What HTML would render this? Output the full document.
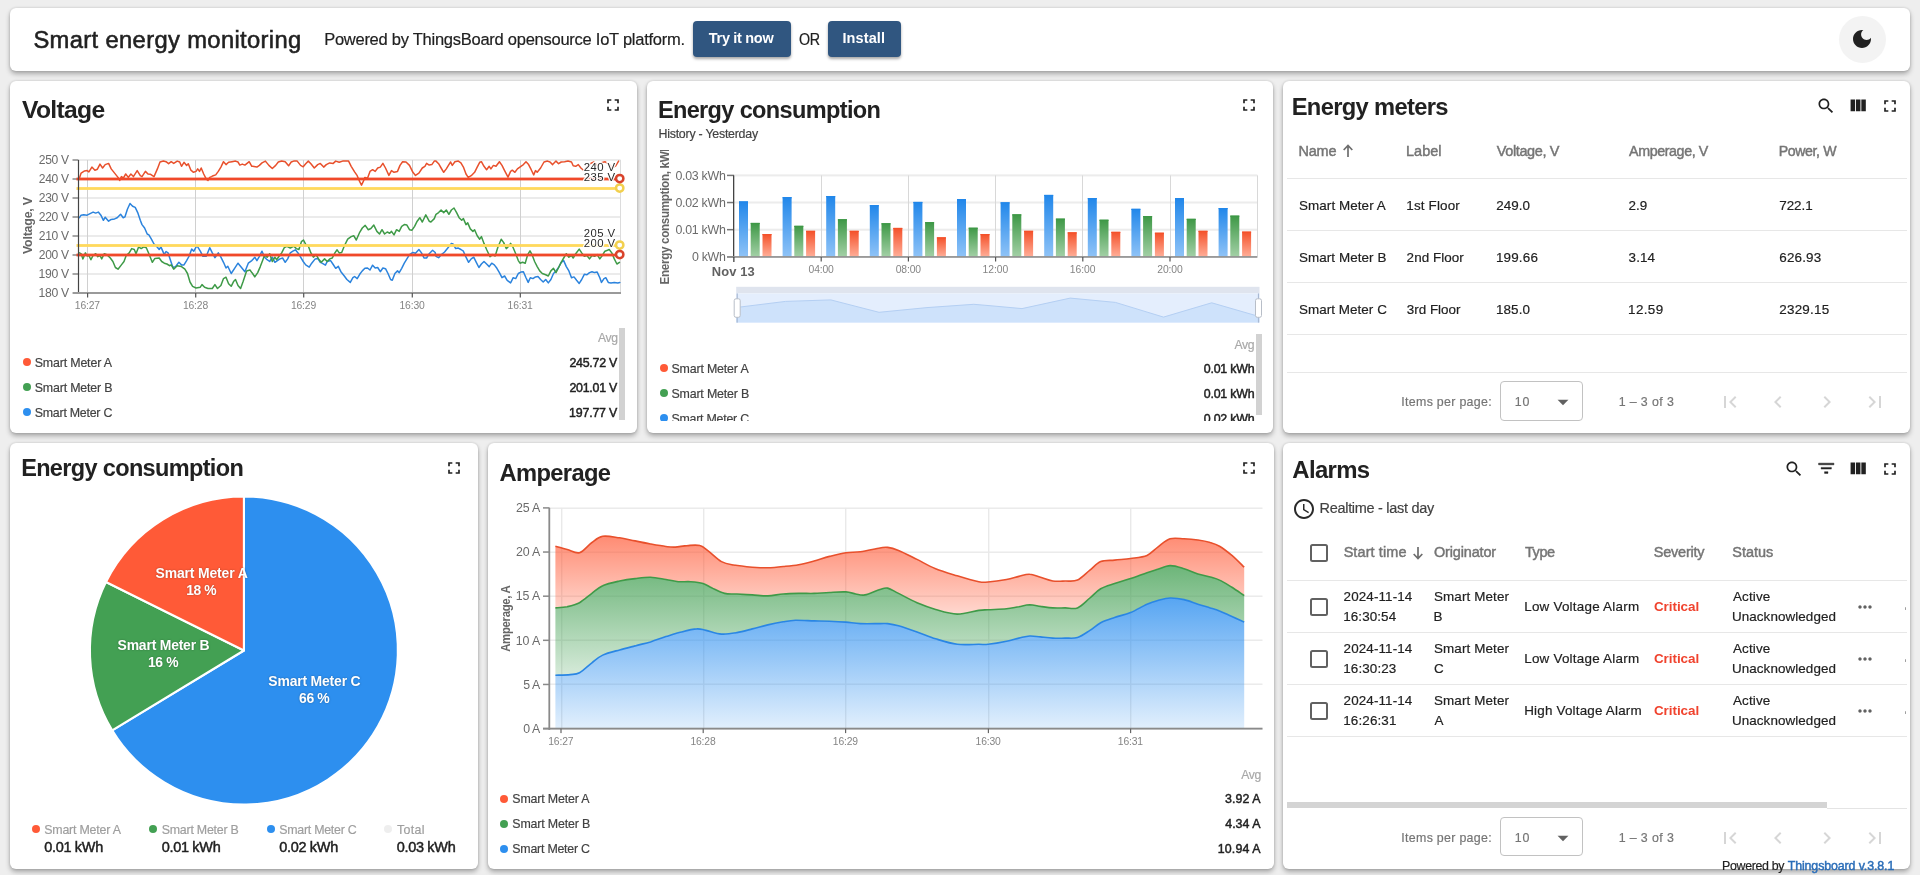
<!DOCTYPE html>
<html lang="en">
<head>
<meta charset="utf-8">
<title>Smart energy monitoring</title>
<style>
html,body{margin:0;padding:0}
body{width:1920px;height:875px;overflow:hidden;background:#eeeeee;font-family:"Liberation Sans",sans-serif;position:relative;color:#212121}
.card{position:absolute;background:#fff;border-radius:6px;box-shadow:0 3px 5px rgba(0,0,0,.29),0 0 3px rgba(0,0,0,.16);overflow:visible;will-change:transform}
.t{position:absolute;white-space:nowrap;display:block}
.ic,.ch,.b{position:absolute;display:block}
.ch text{font-family:"Liberation Sans",sans-serif}
.btn{position:absolute;display:block;background:#305680;border-radius:4px;box-shadow:0 2px 3px rgba(0,0,0,.35)}
h1,h2,p{margin:0;font-weight:inherit;font-size:inherit}
</style>
</head>
<body>
<section class="card hdr" style="left:10px;top:8px;width:1900px;height:63px">
<h1>
<span class="t " style="left:23.42px;top:20.28px;font-size:23.77px;line-height:23.77px;color:#212121;-webkit-text-stroke:0.45px currentColor;letter-spacing:0.348px;-webkit-text-stroke:0.55px #212121;">Smart energy monitoring</span>
</h1>
<span class="t " style="left:314.14px;top:23.60px;font-size:16.53px;line-height:16.53px;color:#212121;-webkit-text-stroke:0.18px currentColor;letter-spacing:-0.263px;">Powered by ThingsBoard opensource IoT platform.</span>
<a class="btn" style="left:683px;top:13px;width:98px;height:35.5px">
<span class="t " style="left:15.84px;top:10.35px;font-size:14.47px;line-height:14.47px;color:#fff;font-weight:700;letter-spacing:-0.299px;">Try it now</span>
</a>
<span class="t " style="left:789.02px;top:25.40px;font-size:14.29px;line-height:14.29px;color:#212121;-webkit-text-stroke:0.18px currentColor;letter-spacing:-0.400px;transform:scaleY(1.157);transform-origin:0 12.10px;">OR</span>
<a class="btn" style="left:817.8px;top:13px;width:72.8px;height:35.5px">
<span class="t " style="left:14.63px;top:10.35px;font-size:14.47px;line-height:14.47px;color:#fff;font-weight:700;letter-spacing:0.131px;">Install</span>
</a>
<div class="b" style="left:1829.00px;top:7.50px;width:47.00px;height:47.00px;border-radius:50%;background:#f3f3f3"></div>
<svg class="ic" style="left:1840.20px;top:19.00px" width="24" height="24" viewBox="0 0 24 24"><path fill="#212121" d="M12 3c-4.97 0-9 4.03-9 9s4.03 9 9 9 9-4.03 9-9c0-.46-.04-.92-.1-1.36-.98 1.37-2.58 2.26-4.4 2.26-2.98 0-5.4-2.42-5.4-5.4 0-1.81.89-3.42 2.26-4.4-.44-.06-.9-.1-1.36-.1z"/></svg>
</section>
<section class="card " style="left:10px;top:81.2px;width:627px;height:352px">
<h2>
<span class="t " style="left:12.03px;top:16.70px;font-size:24.69px;line-height:24.69px;color:#212121;font-weight:700;letter-spacing:-0.691px;transform:scaleY(1.004);transform-origin:0 20.90px;">Voltage</span>
</h2>
<svg class="ic" style="left:593.00px;top:13.80px" width="20" height="20" viewBox="0 0 24 24"><path fill="#212121" d="M7 14H5v5h5v-2H7v-3zm-2-4h2V7h3V5H5v5zm12 7h-3v2h5v-5h-2v3zM14 5v2h3v3h2V5h-5z"/></svg>
<svg class="ch" style="left:0px;top:58.8px" width="627" height="180" viewBox="10 140 627 180">
<rect x="78.5" y="292.0" width="542.0" height="2" fill="#ebebeb"/>
<rect x="78.5" y="273.0" width="542.0" height="2" fill="#ebebeb"/>
<rect x="78.5" y="254.0" width="542.0" height="2" fill="#ebebeb"/>
<rect x="78.5" y="235.0" width="542.0" height="2" fill="#ebebeb"/>
<rect x="78.5" y="216.0" width="542.0" height="2" fill="#ebebeb"/>
<rect x="78.5" y="197.0" width="542.0" height="2" fill="#ebebeb"/>
<rect x="78.5" y="178.0" width="542.0" height="2" fill="#ebebeb"/>
<rect x="78.5" y="159.0" width="542.0" height="2" fill="#ebebeb"/>
<rect x="87" y="160" width="1" height="133" fill="#d0d0d0"/>
<rect x="195" y="160" width="1" height="133" fill="#d0d0d0"/>
<rect x="303" y="160" width="1" height="133" fill="#d0d0d0"/>
<rect x="412" y="160" width="1" height="133" fill="#d0d0d0"/>
<rect x="520" y="160" width="1" height="133" fill="#d0d0d0"/>
<rect x="620.0" y="160" width="1" height="133" fill="#dcdcdc"/>
<rect x="72.5" y="292.25" width="6" height="1.5" fill="#8a8a8a"/>
<text transform="translate(38.47 297.10) scale(1 1.014)" font-size="12.23" fill="#6b6b6b" textLength="30.59" lengthAdjust="spacing">180 V</text>
<rect x="72.5" y="273.25" width="6" height="1.5" fill="#8a8a8a"/>
<text transform="translate(38.47 278.10) scale(1 1.014)" font-size="12.23" fill="#6b6b6b" textLength="30.59" lengthAdjust="spacing">190 V</text>
<rect x="72.5" y="254.25" width="6" height="1.5" fill="#8a8a8a"/>
<text transform="translate(38.79 259.10) scale(1 1.025)" font-size="12.10" fill="#6b6b6b" textLength="30.26" lengthAdjust="spacing">200 V</text>
<rect x="72.5" y="235.25" width="6" height="1.5" fill="#8a8a8a"/>
<text transform="translate(38.79 240.10) scale(1 1.025)" font-size="12.10" fill="#6b6b6b" textLength="30.26" lengthAdjust="spacing">210 V</text>
<rect x="72.5" y="216.25" width="6" height="1.5" fill="#8a8a8a"/>
<text transform="translate(38.79 221.10) scale(1 1.025)" font-size="12.10" fill="#6b6b6b" textLength="30.26" lengthAdjust="spacing">220 V</text>
<rect x="72.5" y="197.25" width="6" height="1.5" fill="#8a8a8a"/>
<text transform="translate(38.79 202.10) scale(1 1.025)" font-size="12.10" fill="#6b6b6b" textLength="30.26" lengthAdjust="spacing">230 V</text>
<rect x="72.5" y="178.25" width="6" height="1.5" fill="#8a8a8a"/>
<text transform="translate(38.79 183.10) scale(1 1.025)" font-size="12.10" fill="#6b6b6b" textLength="30.26" lengthAdjust="spacing">240 V</text>
<rect x="72.5" y="159.25" width="6" height="1.5" fill="#8a8a8a"/>
<text transform="translate(38.79 164.10) scale(1 1.025)" font-size="12.10" fill="#6b6b6b" textLength="30.26" lengthAdjust="spacing">250 V</text>
<text transform="translate(32.30 225.50) rotate(-90)" font-size="12.40" fill="#666" text-anchor="middle" textLength="57.17" lengthAdjust="spacing" font-weight="700">Voltage, V</text>
<polyline points="79.4,178.3 81.1,173.1 84.6,170.9 87.1,170.6 88.9,171.9 91.9,167.1 94.9,170.2 97.4,169.2 100.0,164.1 102.6,168.0 105.2,164.6 108.6,163.4 111.2,168.9 114.6,173.1 118.0,177.4 119.7,180.5 121.4,176.6 123.5,177.8 125.7,174.0 128.3,177.4 130.9,174.0 133.4,176.6 137.2,170.6 140.3,175.7 142.0,176.6 145.4,171.4 148.0,174.0 150.6,174.3 154.0,176.6 157.4,168.9 160.0,162.0 163.4,161.1 166.0,161.7 168.6,163.7 171.2,161.7 173.7,163.4 177.2,161.1 179.7,162.0 181.5,166.3 184.0,162.3 186.6,165.4 188.3,163.7 190.9,170.2 193.5,172.3 196.0,171.4 197.7,168.9 199.5,171.4 201.2,168.0 203.7,174.0 206.3,179.1 208.0,180.5 209.7,177.4 211.5,176.6 213.2,175.7 215.7,174.9 218.3,171.4 220.9,167.1 223.5,161.7 226.0,164.6 228.6,162.3 232.0,161.7 235.5,161.1 238.0,162.0 239.8,165.1 242.3,164.1 244.9,165.1 249.2,161.7 251.8,166.3 252.6,166.3 256.9,167.1 259.4,165.4 262.0,162.9 265.4,161.1 268.9,165.4 272.3,168.5 275.7,165.4 278.3,162.0 281.7,161.1 285.2,161.7 288.6,165.8 291.2,162.0 293.7,161.1 297.2,161.1 300.6,165.4 303.2,166.8 305.7,163.7 308.3,161.1 310.9,163.7 314.3,168.0 317.7,164.6 320.3,163.4 323.7,167.1 326.3,164.6 329.7,162.9 333.2,163.4 335.7,161.1 339.2,162.3 342.6,161.1 346.0,161.1 348.6,161.1 351.2,166.3 354.6,171.9 357.2,175.7 359.7,181.7 361.5,185.2 363.2,181.7 364.9,177.4 367.5,178.3 370.0,171.4 372.6,169.7 375.2,171.4 377.7,168.0 380.3,167.1 382.9,163.4 385.5,168.0 388.9,175.4 391.5,170.6 394.0,172.3 397.5,171.4 400.0,165.4 402.6,161.7 406.0,162.0 409.5,165.4 412.9,172.3 415.5,175.4 418.9,173.1 422.3,168.0 424.9,166.3 426.6,163.4 429.2,165.1 431.8,164.6 434.3,161.1 436.0,161.1 438.6,163.7 441.1,168.0 443.7,172.3 446.3,168.9 448.9,164.6 450.6,162.0 452.3,165.4 454.9,161.7 458.3,161.1 460.9,162.9 463.4,167.1 466.0,174.0 468.2,177.4 471.2,175.7 474.6,172.3 477.2,167.1 479.7,162.3 481.4,161.7 484.0,166.3 486.6,169.7 489.2,166.3 490.9,168.9 493.4,165.4 496.0,166.3 499.4,161.7 502.0,165.4 504.6,170.6 508.0,177.1 510.6,171.4 512.3,170.2 514.9,172.3 517.4,168.9 520.9,166.3 523.4,164.6 526.0,161.7 528.6,164.6 531.2,169.7 533.7,174.9 535.5,170.6 537.2,172.3 540.6,168.0 544.0,162.0 547.5,161.1 550.0,162.0 552.6,164.6 556.0,161.1 558.6,163.7 561.2,162.0 564.6,161.7 568.0,161.1 571.5,162.0 573.2,165.8 575.7,166.3 578.3,164.6 580.9,168.0 583.5,170.2 586.9,167.1 590.3,163.7 593.8,162.0 597.2,165.4 600.6,162.9 604.9,161.7 609.2,164.6 612.6,168.0 615.7,165.8 618.6,161.1" fill="none" stroke="#E8502C" stroke-width="1.5" stroke-linejoin="round" stroke-linecap="round"/>
<polyline points="79.4,217.7 81.1,215.2 83.7,214.8 87.1,215.2 90.6,213.4 93.1,212.1 95.7,213.1 98.3,212.1 100.9,215.2 103.4,220.3 105.2,217.2 108.6,221.2 111.2,219.4 114.6,218.9 117.2,217.7 120.6,214.3 123.2,217.7 124.9,216.9 127.4,209.2 130.0,203.5 132.6,206.2 135.2,207.4 137.7,212.6 140.3,220.3 142.0,224.6 144.6,228.0 147.2,234.0 148.9,234.9 151.4,239.2 154.0,244.0 155.7,245.2 159.2,249.5 160.9,246.9 164.3,254.6 166.0,251.5 168.1,252.9 170.3,259.7 172.9,267.5 175.5,266.6 178.9,262.3 181.5,264.9 184.0,264.9 186.6,260.6 189.2,256.0 191.7,249.1 193.8,251.2 196.9,245.7 200.3,251.2 202.9,256.3 206.3,256.3 209.7,247.7 212.3,252.9 214.9,257.7 218.3,252.9 220.9,257.2 223.5,262.3 226.0,268.0 227.8,266.3 231.2,273.5 234.6,268.3 238.0,263.2 241.5,267.5 244.9,271.7 248.3,263.2 251.8,260.6 252.6,259.7 254.8,257.2 256.9,260.6 259.4,256.3 262.0,251.2 264.6,257.2 267.1,259.7 269.7,261.5 272.3,257.2 274.9,262.3 277.4,260.6 280.0,258.9 282.6,258.0 285.2,262.3 287.7,258.9 290.3,252.9 292.9,251.2 295.4,249.8 298.0,252.9 300.6,257.2 303.2,261.5 305.7,264.9 309.2,267.1 311.7,263.2 315.2,258.9 317.7,258.4 320.3,262.3 322.0,263.2 325.4,265.2 327.2,261.5 330.6,260.6 333.2,264.5 335.7,268.3 338.3,266.3 340.9,271.7 344.3,276.0 346.9,279.5 350.3,282.4 352.9,277.7 354.6,276.5 357.2,278.6 359.7,274.3 362.3,270.9 364.9,268.3 367.5,268.0 370.0,270.0 372.6,265.2 375.2,268.0 377.7,267.5 380.3,271.7 382.9,268.0 385.5,268.7 388.0,273.5 390.6,279.5 392.3,280.3 394.9,273.5 397.5,270.9 399.2,272.6 401.7,268.3 404.3,263.2 406.9,258.9 409.5,254.6 412.9,252.5 415.5,253.2 418.9,249.5 421.5,252.9 424.0,258.0 426.6,258.0 429.2,253.7 432.6,250.3 435.2,252.5 436.0,256.3 438.6,257.7 441.1,254.9 444.6,252.0 448.0,247.7 451.4,243.4 453.1,244.0 455.7,248.6 458.3,248.1 460.9,249.5 463.4,251.2 466.0,257.2 468.6,262.3 471.2,258.9 473.7,257.2 476.3,262.3 478.9,267.5 481.4,264.0 484.0,261.5 486.6,264.0 489.2,266.6 491.7,263.2 494.3,264.9 496.9,268.3 499.4,272.6 502.0,277.7 504.6,276.0 507.2,280.3 510.6,282.9 513.2,277.7 515.7,278.6 518.3,273.5 520.9,272.1 523.4,271.7 526.0,277.7 528.2,282.4 530.3,277.7 532.9,278.6 535.5,276.9 538.0,276.5 540.6,279.5 543.2,282.0 545.7,279.5 548.3,282.9 550.9,279.5 553.5,273.5 556.0,270.9 558.6,267.5 561.2,262.3 563.7,260.6 566.3,266.6 568.9,270.9 571.5,277.7 574.0,276.9 576.6,280.3 579.2,283.4 581.7,279.5 584.3,274.3 586.9,274.8 589.5,272.6 592.0,271.7 594.6,272.6 597.2,272.1 599.8,277.7 601.5,282.4 604.0,278.6 605.8,277.7 608.3,282.4 610.9,282.9 614.3,282.4 617.8,282.9 619.8,282.4" fill="none" stroke="#2B83DD" stroke-width="1.5" stroke-linejoin="round" stroke-linecap="round"/>
<polyline points="79.4,252.9 81.1,253.7 82.9,258.9 85.4,252.9 87.1,256.0 88.9,255.5 90.9,259.7 93.1,255.5 95.7,253.7 97.8,256.7 100.0,255.5 101.7,258.9 104.3,253.7 106.9,254.6 110.3,258.0 112.9,261.5 115.4,267.5 118.0,269.2 121.4,264.9 124.0,261.5 126.2,255.5 129.2,252.9 131.7,248.6 134.3,249.5 136.0,253.7 138.6,246.9 141.2,248.6 143.7,246.9 146.3,247.7 148.9,253.7 152.3,262.3 154.9,258.4 159.2,258.0 161.7,261.5 164.3,263.2 166.9,264.0 169.5,265.7 171.2,264.9 173.7,269.2 177.2,265.7 181.5,266.6 184.9,269.2 187.5,273.5 190.0,282.0 192.6,286.3 196.0,288.0 200.3,287.2 202.0,284.6 204.6,287.2 208.0,288.5 212.3,288.5 214.9,284.6 217.5,288.5 220.9,285.5 223.5,278.6 226.0,277.2 228.6,283.7 231.2,286.3 233.8,281.2 235.5,279.5 238.0,285.5 240.6,288.5 243.2,281.2 246.6,270.9 250.0,270.0 251.8,272.6 252.6,273.5 254.8,276.9 257.7,272.6 260.3,266.6 262.9,259.7 264.6,254.9 267.1,257.2 269.7,253.7 272.3,261.5 274.9,257.2 276.6,259.7 279.1,256.3 281.7,252.9 284.3,247.7 286.9,246.4 290.3,248.1 293.7,246.0 296.3,248.6 298.9,249.5 301.4,241.7 303.5,240.0 305.7,244.3 308.3,246.0 310.9,252.9 313.4,257.2 316.0,254.6 318.6,258.9 321.2,262.3 324.6,258.9 327.2,261.5 329.7,258.9 332.3,258.0 334.9,252.9 337.1,249.8 339.2,252.9 341.7,252.5 344.3,246.0 347.7,239.2 351.2,236.6 353.7,235.7 356.3,240.0 359.7,232.3 362.3,228.0 365.2,225.4 368.3,229.7 370.9,228.5 373.8,225.1 376.9,231.4 379.5,234.0 382.0,229.7 384.6,234.0 387.2,232.0 389.7,233.2 391.5,231.4 394.0,234.9 396.6,229.7 399.2,231.4 401.7,226.3 404.3,224.6 406.9,225.1 409.5,229.7 412.0,230.2 414.6,226.3 417.2,221.2 419.8,217.7 422.3,222.0 425.8,214.8 429.2,221.2 430.9,222.0 434.3,218.6 436.0,214.3 438.6,212.6 441.1,210.0 443.7,212.6 446.3,210.0 448.9,214.3 451.4,210.0 454.0,208.0 456.6,212.6 459.1,217.7 461.7,220.3 463.4,218.6 466.0,224.6 467.7,222.9 470.3,228.9 472.9,231.4 474.6,229.7 477.2,235.7 479.7,239.2 481.4,236.6 484.0,243.4 486.6,249.5 490.0,256.7 492.6,254.6 495.2,256.0 497.7,247.7 501.2,239.2 503.7,242.6 506.3,248.6 508.9,246.0 510.6,243.4 513.2,247.7 515.7,253.7 518.3,260.6 520.0,263.2 522.6,262.3 525.2,263.2 527.7,254.6 530.0,250.8 532.0,254.6 534.6,261.5 537.2,266.6 539.7,270.9 542.3,273.5 545.7,274.8 548.3,276.0 550.9,270.9 553.5,268.3 556.0,272.6 558.6,267.5 561.2,262.3 563.7,258.0 566.3,253.7 568.9,257.2 571.5,255.5 573.2,258.0 575.7,253.7 579.2,249.1 581.7,252.9 584.3,256.3 586.9,255.5 589.5,258.9 592.0,255.5 594.6,256.3 597.2,254.6 599.8,258.9 602.3,255.5 604.9,251.2 607.5,250.3 609.2,249.5 611.8,252.9 614.3,258.9 616.9,264.0 619.5,262.3" fill="none" stroke="#3E9A47" stroke-width="1.5" stroke-linejoin="round" stroke-linecap="round"/>
<rect x="76.5" y="177.60" width="544.0" height="2.8" fill="#F0492A"/>
<rect x="76.5" y="187.10" width="544.0" height="2.8" fill="#FFD95C"/>
<rect x="76.5" y="244.10" width="544.0" height="2.8" fill="#FFD95C"/>
<rect x="76.5" y="253.60" width="544.0" height="2.8" fill="#F0492A"/>
<rect x="77.9" y="160" width="1.2" height="133.5" fill="#444"/>
<rect x="73" y="292" width="548.0" height="2" fill="#9a9a9a"/>
<rect x="87.0" y="293" width="1.2" height="4.5" fill="#555"/>
<text transform="translate(87.47 309.20)" font-size="10.33" fill="#858585" text-anchor="middle" textLength="25.31" lengthAdjust="spacing">16:27</text>
<rect x="195.1" y="293" width="1.2" height="4.5" fill="#555"/>
<text transform="translate(195.53 309.20)" font-size="10.33" fill="#858585" text-anchor="middle" textLength="25.24" lengthAdjust="spacing">16:28</text>
<rect x="303.1" y="293" width="1.2" height="4.5" fill="#555"/>
<text transform="translate(303.55 309.20)" font-size="10.33" fill="#858585" text-anchor="middle" textLength="25.28" lengthAdjust="spacing">16:29</text>
<rect x="411.7" y="293" width="1.2" height="4.5" fill="#555"/>
<text transform="translate(412.11 309.20)" font-size="10.33" fill="#858585" text-anchor="middle" textLength="25.19" lengthAdjust="spacing">16:30</text>
<rect x="519.7" y="293" width="1.2" height="4.5" fill="#555"/>
<text transform="translate(520.16 309.20)" font-size="10.33" fill="#858585" text-anchor="middle" textLength="25.29" lengthAdjust="spacing">16:31</text>
<text transform="translate(583.63 170.90)" font-size="11.37" fill="#2b2b2b" textLength="31.42" lengthAdjust="spacing" stroke="#fff" stroke-width="2.6" stroke-linejoin="round" paint-order="stroke" stroke-opacity="0.92">240 V</text>
<text transform="translate(583.63 180.50)" font-size="11.37" fill="#2b2b2b" textLength="31.42" lengthAdjust="spacing" stroke="#fff" stroke-width="2.6" stroke-linejoin="round" paint-order="stroke" stroke-opacity="0.92">235 V</text>
<text transform="translate(583.63 237.00)" font-size="11.37" fill="#2b2b2b" textLength="31.42" lengthAdjust="spacing" stroke="#fff" stroke-width="2.6" stroke-linejoin="round" paint-order="stroke" stroke-opacity="0.92">205 V</text>
<text transform="translate(583.63 247.00)" font-size="11.37" fill="#2b2b2b" textLength="31.42" lengthAdjust="spacing" stroke="#fff" stroke-width="2.6" stroke-linejoin="round" paint-order="stroke" stroke-opacity="0.92">200 V</text>
<circle cx="619.7" cy="188.1" r="3.7" fill="#fff" stroke="#F2D04E" stroke-width="2.5"/>
<circle cx="619.7" cy="178.6" r="3.7" fill="#fff" stroke="#D9432B" stroke-width="2.5"/>
<circle cx="619.7" cy="245.1" r="3.7" fill="#fff" stroke="#F2D04E" stroke-width="2.5"/>
<circle cx="619.7" cy="254.6" r="3.7" fill="#fff" stroke="#D9432B" stroke-width="2.5"/>
</svg>
<span class="t " style="left:587.98px;top:250.78px;font-size:12.19px;line-height:12.19px;color:#a8a8a8;-webkit-text-stroke:0.18px currentColor;letter-spacing:-0.341px;transform:scaleY(1.017);transform-origin:0 10.32px;">Avg</span>
<div class="b" style="left:12.80px;top:277.40px;width:8.00px;height:8.00px;border-radius:50%;background:#FF5A37"></div>
<span class="t " style="left:24.74px;top:275.90px;font-size:12.40px;line-height:12.40px;color:#424242;-webkit-text-stroke:0.18px currentColor;letter-spacing:-0.164px;">Smart Meter A</span>
<span class="t " style="left:559.38px;top:275.80px;font-size:12.40px;line-height:12.40px;color:#212121;-webkit-text-stroke:0.45px currentColor;letter-spacing:-0.238px;">245.72 V</span>
<div class="b" style="left:12.80px;top:302.40px;width:8.00px;height:8.00px;border-radius:50%;background:#43A053"></div>
<span class="t " style="left:24.74px;top:300.90px;font-size:12.40px;line-height:12.40px;color:#424242;-webkit-text-stroke:0.18px currentColor;letter-spacing:-0.168px;">Smart Meter B</span>
<span class="t " style="left:559.38px;top:300.80px;font-size:12.40px;line-height:12.40px;color:#212121;-webkit-text-stroke:0.45px currentColor;letter-spacing:-0.238px;">201.01 V</span>
<div class="b" style="left:12.80px;top:327.40px;width:8.00px;height:8.00px;border-radius:50%;background:#2D8FEF"></div>
<span class="t " style="left:24.74px;top:325.90px;font-size:12.40px;line-height:12.40px;color:#424242;-webkit-text-stroke:0.18px currentColor;letter-spacing:-0.240px;">Smart Meter C</span>
<span class="t " style="left:559.06px;top:325.80px;font-size:12.40px;line-height:12.40px;color:#212121;-webkit-text-stroke:0.45px currentColor;letter-spacing:-0.193px;">197.77 V</span>
<div class="b" style="left:609.30px;top:247.30px;width:5.40px;height:91.50px;background:#d2d2d2"></div>
</section>
<section class="card " style="left:647px;top:81.2px;width:626.2px;height:352px">
<h2>
<span class="t " style="left:10.92px;top:17.66px;font-size:23.55px;line-height:23.55px;color:#212121;font-weight:700;letter-spacing:-0.659px;transform:scaleY(1.053);transform-origin:0 19.94px;">Energy consumption</span>
</h2>
<span class="t " style="left:11.48px;top:47.40px;font-size:12.40px;line-height:12.40px;color:#424242;-webkit-text-stroke:0.18px currentColor;letter-spacing:-0.241px;">History - Yesterday</span>
<svg class="ic" style="left:592.00px;top:13.80px" width="20" height="20" viewBox="0 0 24 24"><path fill="#212121" d="M7 14H5v5h5v-2H7v-3zm-2-4h2V7h3V5H5v5zm12 7h-3v2h5v-5h-2v3zM14 5v2h3v3h2V5h-5z"/></svg>
<svg class="ch" style="left:0px;top:66.8px" width="626" height="182" viewBox="647 148 626 182">
<defs><linearGradient id="gb" x1="0" y1="0" x2="0" y2="1"><stop offset="0" stop-color="#2187EA"/><stop offset="1" stop-color="#8FC3F7"/></linearGradient><linearGradient id="gg" x1="0" y1="0" x2="0" y2="1"><stop offset="0" stop-color="#3E9846"/><stop offset="1" stop-color="#A3D0A6"/></linearGradient><linearGradient id="gr" x1="0" y1="0" x2="0" y2="1"><stop offset="0" stop-color="#F4512A"/><stop offset="1" stop-color="#FFAE98"/></linearGradient><clipPath id="cpb"><rect x="647" y="150" width="626" height="200"/></clipPath></defs>
<rect x="734.0" y="228.7" width="523.4" height="2" fill="#ececec"/>
<rect x="734.0" y="201.5" width="523.4" height="2" fill="#ececec"/>
<rect x="734.0" y="174.4" width="523.4" height="2" fill="#ececec"/>
<rect x="821" y="175.4" width="1" height="81" fill="#d8d8d8"/>
<rect x="908" y="175.4" width="1" height="81" fill="#d8d8d8"/>
<rect x="995" y="175.4" width="1" height="81" fill="#d8d8d8"/>
<rect x="1082" y="175.4" width="1" height="81" fill="#d8d8d8"/>
<rect x="1170" y="175.4" width="1" height="81" fill="#d8d8d8"/>
<rect x="1257" y="175.4" width="1" height="81" fill="#d8d8d8"/>
<rect x="727" y="174.66" width="7" height="1.5" fill="#777"/>
<text transform="translate(725.81 179.61)" font-size="12.40" fill="#6b6b6b" text-anchor="end" textLength="50.29" lengthAdjust="spacing">0.03 kWh</text>
<rect x="727" y="201.79" width="7" height="1.5" fill="#777"/>
<text transform="translate(725.81 206.74)" font-size="12.40" fill="#6b6b6b" text-anchor="end" textLength="50.29" lengthAdjust="spacing">0.02 kWh</text>
<rect x="727" y="228.92" width="7" height="1.5" fill="#777"/>
<text transform="translate(725.81 233.87)" font-size="12.40" fill="#6b6b6b" text-anchor="end" textLength="50.29" lengthAdjust="spacing">0.01 kWh</text>
<rect x="727" y="256.05" width="7" height="1.5" fill="#777"/>
<text transform="translate(725.81 261.00)" font-size="12.40" fill="#6b6b6b" text-anchor="end" textLength="33.79" lengthAdjust="spacing">0 kWh</text>
<g clip-path="url(#cpb)"><text transform="translate(669.22 284.50) rotate(-90) scale(1 1.063)" font-size="11.67" fill="#666" textLength="140.00" lengthAdjust="spacing" font-weight="700">Energy consumption, kWh</text></g>
<rect x="739.0" y="201.4" width="9" height="55.4" fill="url(#gb)"/>
<rect x="739.0" y="201.4" width="9" height="1.2" fill="#2187EA"/>
<rect x="750.7" y="222.9" width="9" height="33.9" fill="url(#gg)"/>
<rect x="750.7" y="222.9" width="9" height="1.2" fill="#3E9846"/>
<rect x="762.5" y="234.0" width="9" height="22.8" fill="url(#gr)"/>
<rect x="762.5" y="234.0" width="9" height="1.2" fill="#F4512A"/>
<rect x="782.6" y="197.1" width="9" height="59.7" fill="url(#gb)"/>
<rect x="782.6" y="197.1" width="9" height="1.2" fill="#2187EA"/>
<rect x="794.3" y="225.8" width="9" height="31.0" fill="url(#gg)"/>
<rect x="794.3" y="225.8" width="9" height="1.2" fill="#3E9846"/>
<rect x="806.1" y="230.8" width="9" height="26.0" fill="url(#gr)"/>
<rect x="806.1" y="230.8" width="9" height="1.2" fill="#F4512A"/>
<rect x="826.2" y="196.0" width="9" height="60.8" fill="url(#gb)"/>
<rect x="826.2" y="196.0" width="9" height="1.2" fill="#2187EA"/>
<rect x="837.9" y="219.2" width="9" height="37.6" fill="url(#gg)"/>
<rect x="837.9" y="219.2" width="9" height="1.2" fill="#3E9846"/>
<rect x="849.7" y="230.8" width="9" height="26.0" fill="url(#gr)"/>
<rect x="849.7" y="230.8" width="9" height="1.2" fill="#F4512A"/>
<rect x="869.8" y="205.1" width="9" height="51.7" fill="url(#gb)"/>
<rect x="869.8" y="205.1" width="9" height="1.2" fill="#2187EA"/>
<rect x="881.5" y="223.2" width="9" height="33.6" fill="url(#gg)"/>
<rect x="881.5" y="223.2" width="9" height="1.2" fill="#3E9846"/>
<rect x="893.3" y="227.9" width="9" height="28.9" fill="url(#gr)"/>
<rect x="893.3" y="227.9" width="9" height="1.2" fill="#F4512A"/>
<rect x="913.4" y="201.9" width="9" height="54.9" fill="url(#gb)"/>
<rect x="913.4" y="201.9" width="9" height="1.2" fill="#2187EA"/>
<rect x="925.1" y="222.1" width="9" height="34.7" fill="url(#gg)"/>
<rect x="925.1" y="222.1" width="9" height="1.2" fill="#3E9846"/>
<rect x="936.9" y="237.3" width="9" height="19.5" fill="url(#gr)"/>
<rect x="936.9" y="237.3" width="9" height="1.2" fill="#F4512A"/>
<rect x="957.0" y="199.0" width="9" height="57.8" fill="url(#gb)"/>
<rect x="957.0" y="199.0" width="9" height="1.2" fill="#2187EA"/>
<rect x="968.7" y="227.7" width="9" height="29.1" fill="url(#gg)"/>
<rect x="968.7" y="227.7" width="9" height="1.2" fill="#3E9846"/>
<rect x="980.5" y="234.0" width="9" height="22.8" fill="url(#gr)"/>
<rect x="980.5" y="234.0" width="9" height="1.2" fill="#F4512A"/>
<rect x="1000.6" y="202.3" width="9" height="54.5" fill="url(#gb)"/>
<rect x="1000.6" y="202.3" width="9" height="1.2" fill="#2187EA"/>
<rect x="1012.3" y="214.3" width="9" height="42.5" fill="url(#gg)"/>
<rect x="1012.3" y="214.3" width="9" height="1.2" fill="#3E9846"/>
<rect x="1024.1" y="230.8" width="9" height="26.0" fill="url(#gr)"/>
<rect x="1024.1" y="230.8" width="9" height="1.2" fill="#F4512A"/>
<rect x="1044.2" y="194.9" width="9" height="61.9" fill="url(#gb)"/>
<rect x="1044.2" y="194.9" width="9" height="1.2" fill="#2187EA"/>
<rect x="1055.9" y="218.6" width="9" height="38.2" fill="url(#gg)"/>
<rect x="1055.9" y="218.6" width="9" height="1.2" fill="#3E9846"/>
<rect x="1067.7" y="232.3" width="9" height="24.5" fill="url(#gr)"/>
<rect x="1067.7" y="232.3" width="9" height="1.2" fill="#F4512A"/>
<rect x="1087.8" y="198.0" width="9" height="58.8" fill="url(#gb)"/>
<rect x="1087.8" y="198.0" width="9" height="1.2" fill="#2187EA"/>
<rect x="1099.5" y="219.7" width="9" height="37.1" fill="url(#gg)"/>
<rect x="1099.5" y="219.7" width="9" height="1.2" fill="#3E9846"/>
<rect x="1111.3" y="231.8" width="9" height="25.0" fill="url(#gr)"/>
<rect x="1111.3" y="231.8" width="9" height="1.2" fill="#F4512A"/>
<rect x="1131.4" y="208.8" width="9" height="48.0" fill="url(#gb)"/>
<rect x="1131.4" y="208.8" width="9" height="1.2" fill="#2187EA"/>
<rect x="1143.1" y="216.0" width="9" height="40.8" fill="url(#gg)"/>
<rect x="1143.1" y="216.0" width="9" height="1.2" fill="#3E9846"/>
<rect x="1154.9" y="232.7" width="9" height="24.1" fill="url(#gr)"/>
<rect x="1154.9" y="232.7" width="9" height="1.2" fill="#F4512A"/>
<rect x="1175.0" y="198.0" width="9" height="58.8" fill="url(#gb)"/>
<rect x="1175.0" y="198.0" width="9" height="1.2" fill="#2187EA"/>
<rect x="1186.7" y="218.8" width="9" height="38.0" fill="url(#gg)"/>
<rect x="1186.7" y="218.8" width="9" height="1.2" fill="#3E9846"/>
<rect x="1198.5" y="230.8" width="9" height="26.0" fill="url(#gr)"/>
<rect x="1198.5" y="230.8" width="9" height="1.2" fill="#F4512A"/>
<rect x="1218.6" y="208.0" width="9" height="48.8" fill="url(#gb)"/>
<rect x="1218.6" y="208.0" width="9" height="1.2" fill="#2187EA"/>
<rect x="1230.3" y="215.6" width="9" height="41.2" fill="url(#gg)"/>
<rect x="1230.3" y="215.6" width="9" height="1.2" fill="#3E9846"/>
<rect x="1242.1" y="231.6" width="9" height="25.2" fill="url(#gr)"/>
<rect x="1242.1" y="231.6" width="9" height="1.2" fill="#F4512A"/>
<rect x="733" y="175.4" width="1.3" height="82" fill="#444"/>
<rect x="727" y="256.1" width="530.4" height="1.7" fill="#909090"/>
<rect x="733.2" y="257" width="1.3" height="5" fill="#444"/>
<rect x="820.6" y="257" width="1.2" height="4.5" fill="#555"/>
<text transform="translate(821.20 273.30)" font-size="10.33" fill="#858585" text-anchor="middle" textLength="25.31" lengthAdjust="spacing">04:00</text>
<rect x="907.8" y="257" width="1.2" height="4.5" fill="#555"/>
<text transform="translate(908.40 273.30)" font-size="10.33" fill="#858585" text-anchor="middle" textLength="25.31" lengthAdjust="spacing">08:00</text>
<rect x="995.0" y="257" width="1.2" height="4.5" fill="#555"/>
<text transform="translate(995.41 273.30)" font-size="10.33" fill="#858585" text-anchor="middle" textLength="25.69" lengthAdjust="spacing">12:00</text>
<rect x="1082.2" y="257" width="1.2" height="4.5" fill="#555"/>
<text transform="translate(1082.61 273.30)" font-size="10.33" fill="#858585" text-anchor="middle" textLength="25.69" lengthAdjust="spacing">16:00</text>
<rect x="1169.4" y="257" width="1.2" height="4.5" fill="#555"/>
<text transform="translate(1169.94 273.30)" font-size="10.33" fill="#858585" text-anchor="middle" textLength="25.42" lengthAdjust="spacing">20:00</text>
<text transform="translate(733.30 276.30)" font-size="12.92" fill="#616161" text-anchor="middle" textLength="42.93" lengthAdjust="spacing" font-weight="700">Nov 13</text>
<rect x="736.2" y="286.8" width="523.3" height="6.6" fill="#DFE4EE"/>
<rect x="736.2" y="293.4" width="523.3" height="29.2" fill="#E4EEFD"/>
<polygon points="736.2,322.6 736.2,307.6 738.9,307.2 785.6,301.4 830.8,299.9 879.0,312.3 927.0,307.6 973.8,304.3 990.0,305.7 1022.0,308.6 1070.2,298.1 1115.4,302.4 1163.5,317.1 1211.7,302.8 1257.0,315.9 1259.5,316.5 1259.5,322.6" fill="#CEE2FB"/>
<polyline points="736.2,307.6 738.9,307.2 785.6,301.4 830.8,299.9 879.0,312.3 927.0,307.6 973.8,304.3 990.0,305.7 1022.0,308.6 1070.2,298.1 1115.4,302.4 1163.5,317.1 1211.7,302.8 1257.0,315.9 1259.5,316.5" fill="none" stroke="#B4CFF3" stroke-width="1"/>
<rect x="736.6" y="293.4" width="1.2" height="29.2" fill="#A9B9D3"/>
<rect x="734.2" y="298.8" width="6" height="18.5" rx="1.8" fill="#fff" stroke="#B8BEC8" stroke-width="1"/>
<rect x="1257.9" y="293.4" width="1.2" height="29.2" fill="#A9B9D3"/>
<rect x="1255.5" y="298.8" width="6" height="18.5" rx="1.8" fill="#fff" stroke="#B8BEC8" stroke-width="1"/>
</svg>
<div class="b" style="left:0;top:248.8px;width:626px;height:91.6px;overflow:hidden">
<span class="t " style="left:587.48px;top:8.78px;font-size:12.19px;line-height:12.19px;color:#a8a8a8;-webkit-text-stroke:0.18px currentColor;letter-spacing:-0.341px;transform:scaleY(1.017);transform-origin:0 10.32px;">Avg</span>
<div class="b" style="left:12.60px;top:34.60px;width:8.00px;height:8.00px;border-radius:50%;background:#FF5A37"></div>
<span class="t " style="left:24.44px;top:33.10px;font-size:12.40px;line-height:12.40px;color:#424242;-webkit-text-stroke:0.18px currentColor;letter-spacing:-0.164px;">Smart Meter A</span>
<span class="t " style="left:556.72px;top:33.00px;font-size:12.40px;line-height:12.40px;color:#212121;-webkit-text-stroke:0.45px currentColor;letter-spacing:-0.213px;">0.01 kWh</span>
<div class="b" style="left:12.60px;top:59.60px;width:8.00px;height:8.00px;border-radius:50%;background:#43A053"></div>
<span class="t " style="left:24.44px;top:58.10px;font-size:12.40px;line-height:12.40px;color:#424242;-webkit-text-stroke:0.18px currentColor;letter-spacing:-0.168px;">Smart Meter B</span>
<span class="t " style="left:556.72px;top:58.00px;font-size:12.40px;line-height:12.40px;color:#212121;-webkit-text-stroke:0.45px currentColor;letter-spacing:-0.213px;">0.01 kWh</span>
<div class="b" style="left:12.60px;top:84.60px;width:8.00px;height:8.00px;border-radius:50%;background:#2D8FEF"></div>
<span class="t " style="left:24.44px;top:83.10px;font-size:12.40px;line-height:12.40px;color:#424242;-webkit-text-stroke:0.18px currentColor;letter-spacing:-0.240px;">Smart Meter C</span>
<span class="t " style="left:556.72px;top:83.00px;font-size:12.40px;line-height:12.40px;color:#212121;-webkit-text-stroke:0.45px currentColor;letter-spacing:-0.213px;">0.02 kWh</span>
<div class="b" style="left:609.20px;top:4.20px;width:5.60px;height:80.70px;background:#d2d2d2"></div>
</div>
</section>
<section class="card " style="left:1283px;top:81.2px;width:627px;height:352px">
<h2>
<span class="t " style="left:8.71px;top:15.03px;font-size:23.71px;line-height:23.71px;color:#212121;font-weight:700;letter-spacing:-0.664px;transform:scaleY(1.046);transform-origin:0 20.07px;">Energy meters</span>
</h2>
<svg class="ic" style="left:532.80px;top:14.80px" width="20" height="20" viewBox="0 0 24 24"><path fill="#212121" d="M15.5 14h-.79l-.28-.27C15.41 12.59 16 11.11 16 9.5 16 5.91 13.09 3 9.5 3S3 5.91 3 9.5 5.91 16 9.5 16c1.61 0 3.09-.59 4.23-1.57l.27.28v.79l5 4.99L20.49 19l-4.99-5zm-6 0C7.01 14 5 11.99 5 9.5S7.01 5 9.5 5 14 7.01 14 9.5 11.99 14 9.5 14z"/></svg>
<svg class="ic" style="left:564.25px;top:14.05px" width="21.5" height="21.5" viewBox="0 0 24 24"><path fill="#212121" d="M10 18h5V5h-5v13zm-6 0h5V5H4v13zM16 5v13h5V5h-5z"/></svg>
<svg class="ic" style="left:597.00px;top:14.80px" width="20" height="20" viewBox="0 0 24 24"><path fill="#212121" d="M7 14H5v5h5v-2H7v-3zm-2-4h2V7h3V5H5v5zm12 7h-3v2h5v-5h-2v3zM14 5v2h3v3h2V5h-5z"/></svg>
<span class="t " style="left:15.41px;top:62.95px;font-size:14.47px;line-height:14.47px;color:#757575;-webkit-text-stroke:0.45px currentColor;letter-spacing:-0.188px;">Name</span>
<svg class="ic" style="left:58.20px;top:61.80px" width="14" height="16" viewBox="0 0 14 16"><path d="M7 13.9V2.6M2.7 7L7 2.5L11.3 7" fill="none" stroke="#6e6e6e" stroke-width="1.7" stroke-linejoin="miter"/></svg>
<span class="t " style="left:123.11px;top:62.95px;font-size:14.47px;line-height:14.47px;color:#757575;-webkit-text-stroke:0.45px currentColor;letter-spacing:-0.036px;">Label</span>
<span class="t " style="left:213.84px;top:62.95px;font-size:14.47px;line-height:14.47px;color:#757575;-webkit-text-stroke:0.45px currentColor;letter-spacing:-0.382px;">Voltage, V</span>
<span class="t " style="left:346.07px;top:63.12px;font-size:14.27px;line-height:14.27px;color:#757575;-webkit-text-stroke:0.45px currentColor;letter-spacing:-0.400px;transform:scaleY(1.014);transform-origin:0 12.08px;">Amperage, V</span>
<span class="t " style="left:495.84px;top:63.24px;font-size:14.13px;line-height:14.13px;color:#757575;-webkit-text-stroke:0.45px currentColor;letter-spacing:-0.396px;transform:scaleY(1.024);transform-origin:0 11.96px;">Power, W</span>
<div class="b" style="left:4.00px;top:97.30px;width:620.00px;height:1.00px;background:#e7e7e7"></div>
<span class="t " style="left:15.99px;top:118.03px;font-size:13.43px;line-height:13.43px;color:#212121;-webkit-text-stroke:0.18px currentColor;letter-spacing:0.082px;">Smart Meter A</span>
<span class="t " style="left:123.28px;top:118.03px;font-size:13.43px;line-height:13.43px;color:#212121;-webkit-text-stroke:0.18px currentColor;letter-spacing:0.160px;">1st Floor</span>
<span class="t " style="left:213.22px;top:118.03px;font-size:13.43px;line-height:13.43px;color:#212121;-webkit-text-stroke:0.18px currentColor;letter-spacing:0.045px;">249.0</span>
<span class="t " style="left:345.42px;top:118.03px;font-size:13.43px;line-height:13.43px;color:#212121;-webkit-text-stroke:0.18px currentColor;letter-spacing:0.068px;">2.9</span>
<span class="t " style="left:496.31px;top:118.03px;font-size:13.43px;line-height:13.43px;color:#212121;-webkit-text-stroke:0.18px currentColor;letter-spacing:-0.069px;">722.1</span>
<div class="b" style="left:4.00px;top:149.30px;width:620.00px;height:1.00px;background:#e7e7e7"></div>
<span class="t " style="left:15.99px;top:170.03px;font-size:13.43px;line-height:13.43px;color:#212121;-webkit-text-stroke:0.18px currentColor;letter-spacing:0.077px;">Smart Meter B</span>
<span class="t " style="left:123.62px;top:170.03px;font-size:13.43px;line-height:13.43px;color:#212121;-webkit-text-stroke:0.18px currentColor;letter-spacing:0.055px;">2nd Floor</span>
<span class="t " style="left:212.88px;top:170.03px;font-size:13.43px;line-height:13.43px;color:#212121;-webkit-text-stroke:0.18px currentColor;letter-spacing:0.185px;">199.66</span>
<span class="t " style="left:345.59px;top:170.03px;font-size:13.43px;line-height:13.43px;color:#212121;-webkit-text-stroke:0.18px currentColor;letter-spacing:0.119px;">3.14</span>
<span class="t " style="left:496.32px;top:170.03px;font-size:13.43px;line-height:13.43px;color:#212121;-webkit-text-stroke:0.18px currentColor;letter-spacing:0.156px;">626.93</span>
<div class="b" style="left:4.00px;top:201.30px;width:620.00px;height:1.00px;background:#e7e7e7"></div>
<span class="t " style="left:15.99px;top:222.03px;font-size:13.43px;line-height:13.43px;color:#212121;-webkit-text-stroke:0.18px currentColor;letter-spacing:0.049px;">Smart Meter C</span>
<span class="t " style="left:123.79px;top:222.03px;font-size:13.43px;line-height:13.43px;color:#212121;-webkit-text-stroke:0.18px currentColor;">3rd Floor</span>
<span class="t " style="left:212.88px;top:222.03px;font-size:13.43px;line-height:13.43px;color:#212121;-webkit-text-stroke:0.18px currentColor;letter-spacing:0.132px;">185.0</span>
<span class="t " style="left:345.08px;top:222.03px;font-size:13.43px;line-height:13.43px;color:#212121;-webkit-text-stroke:0.18px currentColor;letter-spacing:0.360px;">12.59</span>
<span class="t " style="left:496.32px;top:222.03px;font-size:13.43px;line-height:13.43px;color:#212121;-webkit-text-stroke:0.18px currentColor;letter-spacing:0.213px;">2329.15</span>
<div class="b" style="left:4.00px;top:253.30px;width:620.00px;height:1.00px;background:#e7e7e7"></div>
<div class="b" style="left:4.00px;top:291.00px;width:620.00px;height:1.00px;background:#e7e7e7"></div>
<span class="t " style="left:118.36px;top:315.30px;font-size:12.40px;line-height:12.40px;color:#757575;-webkit-text-stroke:0.18px currentColor;letter-spacing:0.294px;">Items per page:</span>
<div class="b" style="left:216.80px;top:300.00px;width:83.20px;height:39.50px;border:1px solid #c2c2c2;border-radius:4px;box-sizing:border-box"></div>
<span class="t " style="left:231.86px;top:315.30px;font-size:12.40px;line-height:12.40px;color:#757575;-webkit-text-stroke:0.18px currentColor;letter-spacing:0.835px;">10</span>
<svg class="ic" style="left:266.50px;top:308.10px" width="26" height="26" viewBox="0 0 24 24"><path fill="#616161" d="M7 10l5 5 5-5z"/></svg>
<span class="t " style="left:335.66px;top:315.30px;font-size:12.40px;line-height:12.40px;color:#757575;-webkit-text-stroke:0.18px currentColor;letter-spacing:0.386px;">1 – 3 of 3</span>
<svg class="ic" style="left:435.30px;top:308.70px" width="24" height="24" viewBox="0 0 24 24"><path fill="#d6d6d6" d="M18.41 16.59L13.82 12l4.59-4.59L17 6l-6 6 6 6zM6 6h2v12H6z"/></svg>
<svg class="ic" style="left:483.00px;top:308.70px" width="24" height="24" viewBox="0 0 24 24"><path fill="#d6d6d6" d="M15.41 7.41L14 6l-6 6 6 6 1.41-1.41L10.83 12z"/></svg>
<svg class="ic" style="left:531.50px;top:308.70px" width="24" height="24" viewBox="0 0 24 24"><path fill="#d6d6d6" d="M10 6L8.59 7.41 13.17 12l-4.58 4.59L10 18l6-6z"/></svg>
<svg class="ic" style="left:579.50px;top:308.70px" width="24" height="24" viewBox="0 0 24 24"><path fill="#d6d6d6" d="M5.59 7.41L10.18 12l-4.59 4.59L7 18l6-6-6-6zM16 6h2v12h-2z"/></svg>
</section>
<section class="card " style="left:10px;top:443.3px;width:467.6px;height:425.7px">
<h2>
<span class="t " style="left:11.13px;top:13.69px;font-size:23.52px;line-height:23.52px;color:#212121;font-weight:700;letter-spacing:-0.659px;transform:scaleY(1.054);transform-origin:0 19.91px;">Energy consumption</span>
</h2>
<svg class="ic" style="left:433.50px;top:15.00px" width="20" height="20" viewBox="0 0 24 24"><path fill="#212121" d="M7 14H5v5h5v-2H7v-3zm-2-4h2V7h3V5H5v5zm12 7h-3v2h5v-5h-2v3zM14 5v2h3v3h2V5h-5z"/></svg>
<svg class="ch" style="left:0px;top:46.69999999999999px" width="467" height="325" viewBox="10 490 467 325">
<path d="M243.9 650.5L243.90 496.50A154.0 154.0 0 1 1 112.19 730.30Z" fill="#2D8FEF" stroke="#fff" stroke-width="2.1" stroke-linejoin="round"/>
<path d="M243.9 650.5L112.19 730.30A154.0 154.0 0 0 1 105.95 582.06Z" fill="#43A053" stroke="#fff" stroke-width="2.1" stroke-linejoin="round"/>
<path d="M243.9 650.5L105.95 582.06A154.0 154.0 0 0 1 243.90 496.50Z" fill="#FF5A37" stroke="#fff" stroke-width="2.1" stroke-linejoin="round"/>
<text transform="translate(201.68 577.90)" font-size="13.95" fill="#fff" text-anchor="middle" textLength="92.17" lengthAdjust="spacing" font-weight="700" style="text-shadow:0 0 2px rgba(0,0,0,.35)">Smart Meter A</text>
<text transform="translate(201.45 594.80) scale(1 1.006)" font-size="13.87" fill="#fff" text-anchor="middle" textLength="30.44" lengthAdjust="spacing" font-weight="700" style="text-shadow:0 0 2px rgba(0,0,0,.35)">18 %</text>
<text transform="translate(163.62 649.90)" font-size="13.95" fill="#fff" text-anchor="middle" textLength="92.04" lengthAdjust="spacing" font-weight="700" style="text-shadow:0 0 2px rgba(0,0,0,.35)">Smart Meter B</text>
<text transform="translate(163.25 666.80) scale(1 1.006)" font-size="13.87" fill="#fff" text-anchor="middle" textLength="30.44" lengthAdjust="spacing" font-weight="700" style="text-shadow:0 0 2px rgba(0,0,0,.35)">16 %</text>
<text transform="translate(314.49 685.90)" font-size="13.95" fill="#fff" text-anchor="middle" textLength="92.28" lengthAdjust="spacing" font-weight="700" style="text-shadow:0 0 2px rgba(0,0,0,.35)">Smart Meter C</text>
<text transform="translate(314.43 702.80)" font-size="13.95" fill="#fff" text-anchor="middle" textLength="30.68" lengthAdjust="spacing" font-weight="700" style="text-shadow:0 0 2px rgba(0,0,0,.35)">66 %</text>
</svg>
<div class="b" style="left:21.95px;top:382.10px;width:8.00px;height:8.00px;border-radius:50%;background:#FF5A37"></div>
<span class="t " style="left:34.19px;top:380.70px;font-size:12.40px;line-height:12.40px;color:#9e9e9e;-webkit-text-stroke:0.18px currentColor;letter-spacing:-0.197px;">Smart Meter A</span>
<span class="t " style="left:34.18px;top:396.75px;font-size:14.47px;line-height:14.47px;color:#212121;-webkit-text-stroke:0.45px currentColor;letter-spacing:-0.301px;">0.01 kWh</span>
<div class="b" style="left:139.45px;top:382.10px;width:8.00px;height:8.00px;border-radius:50%;background:#43A053"></div>
<span class="t " style="left:151.69px;top:380.70px;font-size:12.40px;line-height:12.40px;color:#9e9e9e;-webkit-text-stroke:0.18px currentColor;letter-spacing:-0.227px;">Smart Meter B</span>
<span class="t " style="left:151.68px;top:396.75px;font-size:14.47px;line-height:14.47px;color:#212121;-webkit-text-stroke:0.45px currentColor;letter-spacing:-0.301px;">0.01 kWh</span>
<div class="b" style="left:256.95px;top:382.10px;width:8.00px;height:8.00px;border-radius:50%;background:#2D8FEF"></div>
<span class="t " style="left:269.19px;top:380.70px;font-size:12.40px;line-height:12.40px;color:#9e9e9e;-webkit-text-stroke:0.18px currentColor;letter-spacing:-0.257px;">Smart Meter C</span>
<span class="t " style="left:269.18px;top:396.75px;font-size:14.47px;line-height:14.47px;color:#212121;-webkit-text-stroke:0.45px currentColor;letter-spacing:-0.301px;">0.02 kWh</span>
<div class="b" style="left:374.45px;top:382.10px;width:8.00px;height:8.00px;border-radius:50%;background:#eeeeee"></div>
<span class="t " style="left:386.97px;top:380.70px;font-size:12.40px;line-height:12.40px;color:#9e9e9e;-webkit-text-stroke:0.18px currentColor;letter-spacing:0.353px;">Total</span>
<span class="t " style="left:386.68px;top:396.75px;font-size:14.47px;line-height:14.47px;color:#212121;-webkit-text-stroke:0.45px currentColor;letter-spacing:-0.301px;">0.03 kWh</span>
</section>
<section class="card " style="left:487.8px;top:443.3px;width:785.5px;height:425.7px">
<h2>
<span class="t " style="left:11.61px;top:18.91px;font-size:23.73px;line-height:23.73px;color:#212121;font-weight:700;letter-spacing:-0.664px;transform:scaleY(1.045);transform-origin:0 20.09px;">Amperage</span>
</h2>
<svg class="ic" style="left:751.20px;top:15.00px" width="20" height="20" viewBox="0 0 24 24"><path fill="#212121" d="M7 14H5v5h5v-2H7v-3zm-2-4h2V7h3V5H5v5zm12 7h-3v2h5v-5h-2v3zM14 5v2h3v3h2V5h-5z"/></svg>
<svg class="ch" style="left:0.19999999999998863px;top:51.69999999999999px" width="785" height="265" viewBox="488 495 785 265">
<defs><linearGradient id="ab" gradientUnits="userSpaceOnUse" x1="0" y1="598.0" x2="0" y2="728.6"><stop offset="0" stop-color="#2D8FEF" stop-opacity="0.8"/><stop offset="1" stop-color="#2D8FEF" stop-opacity="0.14"/></linearGradient><linearGradient id="ag" gradientUnits="userSpaceOnUse" x1="0" y1="565.6" x2="0" y2="675.2"><stop offset="0" stop-color="#43A053" stop-opacity="0.78"/><stop offset="1" stop-color="#43A053" stop-opacity="0.22"/></linearGradient><linearGradient id="ar" gradientUnits="userSpaceOnUse" x1="0" y1="536.3" x2="0" y2="614.1"><stop offset="0" stop-color="#FF5A37" stop-opacity="0.7"/><stop offset="1" stop-color="#FF5A37" stop-opacity="0.24"/></linearGradient></defs>
<rect x="549.3" y="728.5" width="713.2" height="1.4" fill="#e9e9e9"/>
<rect x="549.3" y="683.5" width="713.2" height="1.4" fill="#e9e9e9"/>
<rect x="549.3" y="639.5" width="713.2" height="1.4" fill="#e9e9e9"/>
<rect x="549.3" y="595.5" width="713.2" height="1.4" fill="#e9e9e9"/>
<rect x="549.3" y="551.5" width="713.2" height="1.4" fill="#e9e9e9"/>
<rect x="549.3" y="507.5" width="713.2" height="1.4" fill="#e9e9e9"/>
<rect x="561" y="507.9" width="1.4" height="221" fill="#e9e9e9"/>
<rect x="703" y="507.9" width="1.4" height="221" fill="#e9e9e9"/>
<rect x="845" y="507.9" width="1.4" height="221" fill="#e9e9e9"/>
<rect x="988" y="507.9" width="1.4" height="221" fill="#e9e9e9"/>
<rect x="1130" y="507.9" width="1.4" height="221" fill="#e9e9e9"/>
<path d="M555.4 675.2C557.9 675.1 566.2 675.0 570.2 674.6C574.3 674.2 575.9 674.7 579.5 672.7C583.1 670.8 588.0 665.8 591.9 662.8C595.7 659.9 598.0 657.3 602.7 655.1C607.3 653.0 614.2 651.4 619.6 649.9C625.0 648.3 629.9 647.2 635.1 645.9C640.2 644.5 645.3 643.4 650.5 641.9C655.6 640.3 660.8 638.3 665.9 636.6C671.1 635.0 676.2 633.3 681.4 632.0C686.5 630.7 692.7 629.1 696.8 628.9C700.9 628.6 701.9 629.6 706.0 630.4C710.2 631.3 716.3 633.8 721.5 634.1C726.6 634.5 731.8 633.5 736.9 632.6C742.1 631.7 747.2 630.2 752.3 628.9C757.5 627.6 762.6 626.1 767.8 624.9C772.9 623.7 778.6 622.6 783.2 621.8C787.8 621.0 790.4 620.4 795.6 620.2C800.7 620.1 808.4 620.7 814.1 620.9C819.7 621.0 824.2 621.0 829.5 621.2C834.8 621.4 840.7 621.7 845.9 622.1C851.0 622.5 854.7 623.4 860.4 623.6C866.1 623.9 875.4 623.6 880.0 623.6C884.6 623.6 884.6 623.3 887.7 623.6C890.8 624.0 893.6 624.4 898.5 625.8C903.4 627.2 910.9 629.8 917.0 632.0C923.2 634.1 928.9 636.7 935.6 638.8C942.2 640.8 950.0 643.4 957.2 644.3C964.4 645.2 973.6 644.3 978.8 644.3C983.9 644.3 983.4 644.8 988.0 644.3C992.7 643.8 1001.4 642.3 1006.5 641.2C1011.7 640.2 1015.0 639.0 1018.9 638.1C1022.7 637.3 1026.1 636.2 1029.7 636.0C1033.3 635.8 1036.6 636.6 1040.5 636.9C1044.4 637.3 1048.7 637.9 1052.8 638.1C1057.0 638.4 1061.1 638.3 1065.2 638.1C1069.3 638.0 1073.4 638.8 1077.5 637.5C1081.6 636.2 1086.0 632.9 1089.9 630.4C1093.7 628.0 1096.6 624.9 1100.7 622.7C1104.8 620.6 1109.6 619.2 1114.6 617.5C1119.6 615.8 1125.2 614.7 1130.6 612.5C1136.0 610.3 1142.4 606.2 1147.0 604.2C1151.5 602.2 1153.9 601.5 1157.8 600.5C1161.6 599.5 1165.8 598.2 1170.1 598.0C1174.5 597.9 1179.4 598.5 1184.0 599.6C1188.6 600.6 1193.5 602.8 1197.9 604.2C1202.3 605.6 1206.6 606.8 1210.2 607.9C1213.8 609.0 1215.9 609.5 1219.5 611.0C1223.1 612.4 1227.7 614.7 1231.9 616.5C1236.0 618.4 1242.1 621.2 1244.2 622.1L1244.2 728.6L555.4 728.6Z" fill="url(#ab)"/>
<path d="M555.4 607.9C557.4 607.7 563.1 607.5 567.2 606.7C571.2 605.8 575.4 604.9 579.5 602.7C583.6 600.4 588.0 596.2 591.9 593.4C595.7 590.6 598.0 587.7 602.7 585.7C607.3 583.6 614.2 582.2 619.6 581.0C625.0 579.9 629.9 579.2 635.1 578.6C640.2 578.0 645.3 577.2 650.5 577.3C655.6 577.5 661.3 578.8 665.9 579.5C670.6 580.2 674.2 581.3 678.3 581.7C682.4 582.0 686.5 581.4 690.6 581.7C694.7 582.0 699.4 582.4 703.0 583.5C706.6 584.6 708.6 586.5 712.2 588.1C715.8 589.8 720.5 592.4 724.6 593.4C728.7 594.4 732.3 593.8 736.9 594.0C741.5 594.3 747.2 594.6 752.3 594.9C757.5 595.2 762.6 596.0 767.8 595.9C772.9 595.7 778.1 594.4 783.2 594.0C788.4 593.6 793.5 593.5 798.6 593.4C803.8 593.3 808.9 593.5 814.1 593.4C819.2 593.2 824.2 592.7 829.5 592.5C834.8 592.2 841.5 591.6 845.9 591.9C850.2 592.1 852.6 593.5 855.7 594.0C858.9 594.5 861.0 595.7 865.0 594.9C869.0 594.2 876.2 590.5 880.0 589.4C883.8 588.3 884.6 587.5 887.7 588.1C890.8 588.8 893.6 591.0 898.5 593.4C903.4 595.8 910.9 600.0 917.0 602.7C923.2 605.3 928.9 607.5 935.6 609.4C942.2 611.3 950.0 613.9 957.2 614.1C964.4 614.2 973.6 611.1 978.8 610.4C983.9 609.7 983.4 610.0 988.0 609.8C992.7 609.5 1001.4 609.3 1006.5 608.8C1011.7 608.3 1015.0 607.3 1018.9 606.7C1022.7 606.0 1026.1 604.9 1029.7 604.8C1033.3 604.8 1036.6 605.8 1040.5 606.4C1044.4 606.9 1048.7 607.6 1052.8 607.9C1057.0 608.2 1061.1 607.9 1065.2 607.9C1069.3 607.9 1073.4 609.5 1077.5 607.9C1081.6 606.3 1086.0 601.2 1089.9 598.0C1093.7 594.8 1096.6 591.2 1100.7 588.8C1104.8 586.3 1109.6 585.2 1114.6 583.5C1119.6 581.8 1125.2 580.4 1130.6 578.6C1136.0 576.8 1142.4 574.3 1147.0 572.7C1151.5 571.2 1153.9 570.5 1157.8 569.3C1161.6 568.1 1165.8 565.7 1170.1 565.6C1174.5 565.5 1179.4 567.3 1184.0 568.7C1188.6 570.1 1193.5 572.6 1197.9 574.0C1202.3 575.3 1206.6 576.0 1210.2 577.0C1213.8 578.1 1215.9 578.4 1219.5 580.1C1223.1 581.8 1227.7 584.7 1231.9 587.2C1236.0 589.8 1242.1 594.2 1244.2 595.6L1244.2 622.1C1242.1 621.2 1236.0 618.4 1231.9 616.5C1227.7 614.7 1223.1 612.4 1219.5 611.0C1215.9 609.5 1213.8 609.0 1210.2 607.9C1206.6 606.8 1202.3 605.6 1197.9 604.2C1193.5 602.8 1188.6 600.6 1184.0 599.6C1179.4 598.5 1174.5 597.9 1170.1 598.0C1165.8 598.2 1161.6 599.5 1157.8 600.5C1153.9 601.5 1151.5 602.2 1147.0 604.2C1142.4 606.2 1136.0 610.3 1130.6 612.5C1125.2 614.7 1119.6 615.8 1114.6 617.5C1109.6 619.2 1104.8 620.6 1100.7 622.7C1096.6 624.9 1093.7 628.0 1089.9 630.4C1086.0 632.9 1081.6 636.2 1077.5 637.5C1073.4 638.8 1069.3 638.0 1065.2 638.1C1061.1 638.3 1057.0 638.4 1052.8 638.1C1048.7 637.9 1044.4 637.3 1040.5 636.9C1036.6 636.6 1033.3 635.8 1029.7 636.0C1026.1 636.2 1022.7 637.3 1018.9 638.1C1015.0 639.0 1011.7 640.2 1006.5 641.2C1001.4 642.3 992.7 643.8 988.0 644.3C983.4 644.8 983.9 644.3 978.8 644.3C973.6 644.3 964.4 645.2 957.2 644.3C950.0 643.4 942.2 640.8 935.6 638.8C928.9 636.7 923.2 634.1 917.0 632.0C910.9 629.8 903.4 627.2 898.5 625.8C893.6 624.4 890.8 624.0 887.7 623.6C884.6 623.3 884.6 623.6 880.0 623.6C875.4 623.6 866.1 623.9 860.4 623.6C854.7 623.4 851.0 622.5 845.9 622.1C840.7 621.7 834.8 621.4 829.5 621.2C824.2 621.0 819.7 621.0 814.1 620.9C808.4 620.7 800.7 620.1 795.6 620.2C790.4 620.4 787.8 621.0 783.2 621.8C778.6 622.6 772.9 623.7 767.8 624.9C762.6 626.1 757.5 627.6 752.3 628.9C747.2 630.2 742.1 631.7 736.9 632.6C731.8 633.5 726.6 634.5 721.5 634.1C716.3 633.8 710.2 631.3 706.0 630.4C701.9 629.6 700.9 628.6 696.8 628.9C692.7 629.1 686.5 630.7 681.4 632.0C676.2 633.3 671.1 635.0 665.9 636.6C660.8 638.3 655.6 640.3 650.5 641.9C645.3 643.4 640.2 644.5 635.1 645.9C629.9 647.2 625.0 648.3 619.6 649.9C614.2 651.4 607.3 653.0 602.7 655.1C598.0 657.3 595.7 659.9 591.9 662.8C588.0 665.8 583.1 670.8 579.5 672.7C575.9 674.7 574.3 674.2 570.2 674.6C566.2 675.0 557.9 675.1 555.4 675.2Z" fill="url(#ag)"/>
<path d="M555.4 546.2C557.4 546.7 563.1 548.5 567.2 549.6C571.2 550.6 575.4 553.8 579.5 552.7C583.6 551.5 588.0 545.2 591.9 542.5C595.7 539.7 598.0 537.1 602.7 536.3C607.3 535.5 614.2 537.1 619.6 537.8C625.0 538.6 629.9 539.9 635.1 540.9C640.2 542.0 645.3 543.1 650.5 544.0C655.6 544.9 661.8 546.0 665.9 546.5C670.0 547.0 671.6 547.3 675.2 547.1C678.8 546.9 683.4 545.8 687.5 545.6C691.6 545.3 696.3 544.5 699.9 545.6C703.5 546.6 705.5 549.1 709.1 551.7C712.7 554.4 717.4 559.4 721.5 561.6C725.6 563.8 728.7 564.1 733.8 565.0C739.0 565.9 746.7 566.7 752.3 567.2C758.0 567.6 762.6 567.9 767.8 567.8C772.9 567.7 778.1 567.1 783.2 566.5C788.4 566.0 793.5 565.6 798.6 564.7C803.8 563.8 808.9 562.4 814.1 561.0C819.2 559.6 824.2 557.7 829.5 556.4C834.8 555.0 840.7 553.4 845.9 552.7C851.0 551.9 854.7 552.5 860.4 551.7C866.1 551.0 875.4 548.7 880.0 548.0C884.6 547.3 884.6 547.0 887.7 547.4C890.8 547.8 893.6 548.5 898.5 550.5C903.4 552.5 910.9 556.4 917.0 559.4C923.2 562.5 928.9 566.0 935.6 568.7C942.2 571.4 950.0 573.6 957.2 575.8C964.4 578.0 973.6 580.6 978.8 581.7C983.9 582.7 983.4 582.3 988.0 582.0C992.7 581.6 1001.4 580.4 1006.5 579.5C1011.7 578.6 1015.0 577.3 1018.9 576.4C1022.7 575.5 1026.1 574.1 1029.7 574.3C1033.3 574.4 1036.6 576.2 1040.5 577.3C1044.4 578.5 1048.7 580.4 1052.8 581.0C1057.0 581.7 1061.1 581.2 1065.2 581.0C1069.3 580.9 1073.4 581.9 1077.5 580.1C1081.6 578.3 1086.0 573.3 1089.9 570.2C1093.7 567.2 1096.6 563.3 1100.7 561.6C1104.8 559.9 1109.6 560.6 1114.6 560.1C1119.6 559.5 1125.2 559.3 1130.6 558.5C1136.0 557.7 1142.4 557.3 1147.0 555.4C1151.5 553.5 1153.9 549.9 1157.8 547.1C1161.6 544.3 1165.8 540.2 1170.1 538.8C1174.5 537.4 1179.4 538.6 1184.0 538.8C1188.6 539.0 1193.5 539.4 1197.9 540.0C1202.3 540.6 1206.6 541.4 1210.2 542.5C1213.8 543.5 1215.9 544.0 1219.5 546.2C1223.1 548.3 1227.7 551.9 1231.9 555.4C1236.0 558.9 1242.1 565.2 1244.2 567.2L1244.2 595.6C1242.1 594.2 1236.0 589.8 1231.9 587.2C1227.7 584.7 1223.1 581.8 1219.5 580.1C1215.9 578.4 1213.8 578.1 1210.2 577.0C1206.6 576.0 1202.3 575.3 1197.9 574.0C1193.5 572.6 1188.6 570.1 1184.0 568.7C1179.4 567.3 1174.5 565.5 1170.1 565.6C1165.8 565.7 1161.6 568.1 1157.8 569.3C1153.9 570.5 1151.5 571.2 1147.0 572.7C1142.4 574.3 1136.0 576.8 1130.6 578.6C1125.2 580.4 1119.6 581.8 1114.6 583.5C1109.6 585.2 1104.8 586.3 1100.7 588.8C1096.6 591.2 1093.7 594.8 1089.9 598.0C1086.0 601.2 1081.6 606.3 1077.5 607.9C1073.4 609.5 1069.3 607.9 1065.2 607.9C1061.1 607.9 1057.0 608.2 1052.8 607.9C1048.7 607.6 1044.4 606.9 1040.5 606.4C1036.6 605.8 1033.3 604.8 1029.7 604.8C1026.1 604.9 1022.7 606.0 1018.9 606.7C1015.0 607.3 1011.7 608.3 1006.5 608.8C1001.4 609.3 992.7 609.5 988.0 609.8C983.4 610.0 983.9 609.7 978.8 610.4C973.6 611.1 964.4 614.2 957.2 614.1C950.0 613.9 942.2 611.3 935.6 609.4C928.9 607.5 923.2 605.3 917.0 602.7C910.9 600.0 903.4 595.8 898.5 593.4C893.6 591.0 890.8 588.8 887.7 588.1C884.6 587.5 883.8 588.3 880.0 589.4C876.2 590.5 869.0 594.2 865.0 594.9C861.0 595.7 858.9 594.5 855.7 594.0C852.6 593.5 850.2 592.1 845.9 591.9C841.5 591.6 834.8 592.2 829.5 592.5C824.2 592.7 819.2 593.2 814.1 593.4C808.9 593.5 803.8 593.3 798.6 593.4C793.5 593.5 788.4 593.6 783.2 594.0C778.1 594.4 772.9 595.7 767.8 595.9C762.6 596.0 757.5 595.2 752.3 594.9C747.2 594.6 741.5 594.3 736.9 594.0C732.3 593.8 728.7 594.4 724.6 593.4C720.5 592.4 715.8 589.8 712.2 588.1C708.6 586.5 706.6 584.6 703.0 583.5C699.4 582.4 694.7 582.0 690.6 581.7C686.5 581.4 682.4 582.0 678.3 581.7C674.2 581.3 670.6 580.2 665.9 579.5C661.3 578.8 655.6 577.5 650.5 577.3C645.3 577.2 640.2 578.0 635.1 578.6C629.9 579.2 625.0 579.9 619.6 581.0C614.2 582.2 607.3 583.6 602.7 585.7C598.0 587.7 595.7 590.6 591.9 593.4C588.0 596.2 583.6 600.4 579.5 602.7C575.4 604.9 571.2 605.8 567.2 606.7C563.1 607.5 557.4 607.7 555.4 607.9Z" fill="url(#ar)"/>
<path d="M555.4 675.2C557.9 675.1 566.2 675.0 570.2 674.6C574.3 674.2 575.9 674.7 579.5 672.7C583.1 670.8 588.0 665.8 591.9 662.8C595.7 659.9 598.0 657.3 602.7 655.1C607.3 653.0 614.2 651.4 619.6 649.9C625.0 648.3 629.9 647.2 635.1 645.9C640.2 644.5 645.3 643.4 650.5 641.9C655.6 640.3 660.8 638.3 665.9 636.6C671.1 635.0 676.2 633.3 681.4 632.0C686.5 630.7 692.7 629.1 696.8 628.9C700.9 628.6 701.9 629.6 706.0 630.4C710.2 631.3 716.3 633.8 721.5 634.1C726.6 634.5 731.8 633.5 736.9 632.6C742.1 631.7 747.2 630.2 752.3 628.9C757.5 627.6 762.6 626.1 767.8 624.9C772.9 623.7 778.6 622.6 783.2 621.8C787.8 621.0 790.4 620.4 795.6 620.2C800.7 620.1 808.4 620.7 814.1 620.9C819.7 621.0 824.2 621.0 829.5 621.2C834.8 621.4 840.7 621.7 845.9 622.1C851.0 622.5 854.7 623.4 860.4 623.6C866.1 623.9 875.4 623.6 880.0 623.6C884.6 623.6 884.6 623.3 887.7 623.6C890.8 624.0 893.6 624.4 898.5 625.8C903.4 627.2 910.9 629.8 917.0 632.0C923.2 634.1 928.9 636.7 935.6 638.8C942.2 640.8 950.0 643.4 957.2 644.3C964.4 645.2 973.6 644.3 978.8 644.3C983.9 644.3 983.4 644.8 988.0 644.3C992.7 643.8 1001.4 642.3 1006.5 641.2C1011.7 640.2 1015.0 639.0 1018.9 638.1C1022.7 637.3 1026.1 636.2 1029.7 636.0C1033.3 635.8 1036.6 636.6 1040.5 636.9C1044.4 637.3 1048.7 637.9 1052.8 638.1C1057.0 638.4 1061.1 638.3 1065.2 638.1C1069.3 638.0 1073.4 638.8 1077.5 637.5C1081.6 636.2 1086.0 632.9 1089.9 630.4C1093.7 628.0 1096.6 624.9 1100.7 622.7C1104.8 620.6 1109.6 619.2 1114.6 617.5C1119.6 615.8 1125.2 614.7 1130.6 612.5C1136.0 610.3 1142.4 606.2 1147.0 604.2C1151.5 602.2 1153.9 601.5 1157.8 600.5C1161.6 599.5 1165.8 598.2 1170.1 598.0C1174.5 597.9 1179.4 598.5 1184.0 599.6C1188.6 600.6 1193.5 602.8 1197.9 604.2C1202.3 605.6 1206.6 606.8 1210.2 607.9C1213.8 609.0 1215.9 609.5 1219.5 611.0C1223.1 612.4 1227.7 614.7 1231.9 616.5C1236.0 618.4 1242.1 621.2 1244.2 622.1" fill="none" stroke="#2A86E4" stroke-width="1.6"/>
<path d="M555.4 607.9C557.4 607.7 563.1 607.5 567.2 606.7C571.2 605.8 575.4 604.9 579.5 602.7C583.6 600.4 588.0 596.2 591.9 593.4C595.7 590.6 598.0 587.7 602.7 585.7C607.3 583.6 614.2 582.2 619.6 581.0C625.0 579.9 629.9 579.2 635.1 578.6C640.2 578.0 645.3 577.2 650.5 577.3C655.6 577.5 661.3 578.8 665.9 579.5C670.6 580.2 674.2 581.3 678.3 581.7C682.4 582.0 686.5 581.4 690.6 581.7C694.7 582.0 699.4 582.4 703.0 583.5C706.6 584.6 708.6 586.5 712.2 588.1C715.8 589.8 720.5 592.4 724.6 593.4C728.7 594.4 732.3 593.8 736.9 594.0C741.5 594.3 747.2 594.6 752.3 594.9C757.5 595.2 762.6 596.0 767.8 595.9C772.9 595.7 778.1 594.4 783.2 594.0C788.4 593.6 793.5 593.5 798.6 593.4C803.8 593.3 808.9 593.5 814.1 593.4C819.2 593.2 824.2 592.7 829.5 592.5C834.8 592.2 841.5 591.6 845.9 591.9C850.2 592.1 852.6 593.5 855.7 594.0C858.9 594.5 861.0 595.7 865.0 594.9C869.0 594.2 876.2 590.5 880.0 589.4C883.8 588.3 884.6 587.5 887.7 588.1C890.8 588.8 893.6 591.0 898.5 593.4C903.4 595.8 910.9 600.0 917.0 602.7C923.2 605.3 928.9 607.5 935.6 609.4C942.2 611.3 950.0 613.9 957.2 614.1C964.4 614.2 973.6 611.1 978.8 610.4C983.9 609.7 983.4 610.0 988.0 609.8C992.7 609.5 1001.4 609.3 1006.5 608.8C1011.7 608.3 1015.0 607.3 1018.9 606.7C1022.7 606.0 1026.1 604.9 1029.7 604.8C1033.3 604.8 1036.6 605.8 1040.5 606.4C1044.4 606.9 1048.7 607.6 1052.8 607.9C1057.0 608.2 1061.1 607.9 1065.2 607.9C1069.3 607.9 1073.4 609.5 1077.5 607.9C1081.6 606.3 1086.0 601.2 1089.9 598.0C1093.7 594.8 1096.6 591.2 1100.7 588.8C1104.8 586.3 1109.6 585.2 1114.6 583.5C1119.6 581.8 1125.2 580.4 1130.6 578.6C1136.0 576.8 1142.4 574.3 1147.0 572.7C1151.5 571.2 1153.9 570.5 1157.8 569.3C1161.6 568.1 1165.8 565.7 1170.1 565.6C1174.5 565.5 1179.4 567.3 1184.0 568.7C1188.6 570.1 1193.5 572.6 1197.9 574.0C1202.3 575.3 1206.6 576.0 1210.2 577.0C1213.8 578.1 1215.9 578.4 1219.5 580.1C1223.1 581.8 1227.7 584.7 1231.9 587.2C1236.0 589.8 1242.1 594.2 1244.2 595.6" fill="none" stroke="#3F9A48" stroke-width="1.6"/>
<path d="M555.4 546.2C557.4 546.7 563.1 548.5 567.2 549.6C571.2 550.6 575.4 553.8 579.5 552.7C583.6 551.5 588.0 545.2 591.9 542.5C595.7 539.7 598.0 537.1 602.7 536.3C607.3 535.5 614.2 537.1 619.6 537.8C625.0 538.6 629.9 539.9 635.1 540.9C640.2 542.0 645.3 543.1 650.5 544.0C655.6 544.9 661.8 546.0 665.9 546.5C670.0 547.0 671.6 547.3 675.2 547.1C678.8 546.9 683.4 545.8 687.5 545.6C691.6 545.3 696.3 544.5 699.9 545.6C703.5 546.6 705.5 549.1 709.1 551.7C712.7 554.4 717.4 559.4 721.5 561.6C725.6 563.8 728.7 564.1 733.8 565.0C739.0 565.9 746.7 566.7 752.3 567.2C758.0 567.6 762.6 567.9 767.8 567.8C772.9 567.7 778.1 567.1 783.2 566.5C788.4 566.0 793.5 565.6 798.6 564.7C803.8 563.8 808.9 562.4 814.1 561.0C819.2 559.6 824.2 557.7 829.5 556.4C834.8 555.0 840.7 553.4 845.9 552.7C851.0 551.9 854.7 552.5 860.4 551.7C866.1 551.0 875.4 548.7 880.0 548.0C884.6 547.3 884.6 547.0 887.7 547.4C890.8 547.8 893.6 548.5 898.5 550.5C903.4 552.5 910.9 556.4 917.0 559.4C923.2 562.5 928.9 566.0 935.6 568.7C942.2 571.4 950.0 573.6 957.2 575.8C964.4 578.0 973.6 580.6 978.8 581.7C983.9 582.7 983.4 582.3 988.0 582.0C992.7 581.6 1001.4 580.4 1006.5 579.5C1011.7 578.6 1015.0 577.3 1018.9 576.4C1022.7 575.5 1026.1 574.1 1029.7 574.3C1033.3 574.4 1036.6 576.2 1040.5 577.3C1044.4 578.5 1048.7 580.4 1052.8 581.0C1057.0 581.7 1061.1 581.2 1065.2 581.0C1069.3 580.9 1073.4 581.9 1077.5 580.1C1081.6 578.3 1086.0 573.3 1089.9 570.2C1093.7 567.2 1096.6 563.3 1100.7 561.6C1104.8 559.9 1109.6 560.6 1114.6 560.1C1119.6 559.5 1125.2 559.3 1130.6 558.5C1136.0 557.7 1142.4 557.3 1147.0 555.4C1151.5 553.5 1153.9 549.9 1157.8 547.1C1161.6 544.3 1165.8 540.2 1170.1 538.8C1174.5 537.4 1179.4 538.6 1184.0 538.8C1188.6 539.0 1193.5 539.4 1197.9 540.0C1202.3 540.6 1206.6 541.4 1210.2 542.5C1213.8 543.5 1215.9 544.0 1219.5 546.2C1223.1 548.3 1227.7 551.9 1231.9 555.4C1236.0 558.9 1242.1 565.2 1244.2 567.2" fill="none" stroke="#E8502C" stroke-width="1.6"/>
<rect x="543" y="727.85" width="6.5" height="1.5" fill="#8a8a8a"/>
<text transform="translate(540.32 732.80) scale(1 1.008)" font-size="12.31" fill="#6b6b6b" text-anchor="end" textLength="17.10" lengthAdjust="spacing">0 A</text>
<rect x="543" y="683.71" width="6.5" height="1.5" fill="#8a8a8a"/>
<text transform="translate(540.32 688.66) scale(1 1.007)" font-size="12.32" fill="#6b6b6b" text-anchor="end" textLength="17.12" lengthAdjust="spacing">5 A</text>
<rect x="543" y="639.57" width="6.5" height="1.5" fill="#8a8a8a"/>
<text transform="translate(540.32 644.52)" font-size="12.40" fill="#6b6b6b" text-anchor="end" textLength="24.57" lengthAdjust="spacing">10 A</text>
<rect x="543" y="595.43" width="6.5" height="1.5" fill="#8a8a8a"/>
<text transform="translate(540.32 600.38)" font-size="12.40" fill="#6b6b6b" text-anchor="end" textLength="24.57" lengthAdjust="spacing">15 A</text>
<rect x="543" y="551.29" width="6.5" height="1.5" fill="#8a8a8a"/>
<text transform="translate(540.32 556.24)" font-size="12.40" fill="#6b6b6b" text-anchor="end" textLength="24.25" lengthAdjust="spacing">20 A</text>
<rect x="543" y="507.15" width="6.5" height="1.5" fill="#8a8a8a"/>
<text transform="translate(540.32 512.10)" font-size="12.40" fill="#6b6b6b" text-anchor="end" textLength="24.25" lengthAdjust="spacing">25 A</text>
<rect x="548.4" y="507.9" width="1.8" height="222" fill="#8a8a8a"/>
<rect x="543" y="727.7" width="719.5" height="1.8" fill="#8a8a8a"/>
<rect x="560.4" y="728.6" width="1.2" height="4.5" fill="#666"/>
<text transform="translate(560.87 745.20)" font-size="10.33" fill="#858585" text-anchor="middle" textLength="25.31" lengthAdjust="spacing">16:27</text>
<rect x="702.6" y="728.6" width="1.2" height="4.5" fill="#666"/>
<text transform="translate(703.03 745.20)" font-size="10.33" fill="#858585" text-anchor="middle" textLength="25.24" lengthAdjust="spacing">16:28</text>
<rect x="845.0" y="728.6" width="1.2" height="4.5" fill="#666"/>
<text transform="translate(845.45 745.20)" font-size="10.33" fill="#858585" text-anchor="middle" textLength="25.28" lengthAdjust="spacing">16:29</text>
<rect x="987.8" y="728.6" width="1.2" height="4.5" fill="#666"/>
<text transform="translate(988.21 745.20)" font-size="10.33" fill="#858585" text-anchor="middle" textLength="25.19" lengthAdjust="spacing">16:30</text>
<rect x="1130.0" y="728.6" width="1.2" height="4.5" fill="#666"/>
<text transform="translate(1130.46 745.20)" font-size="10.33" fill="#858585" text-anchor="middle" textLength="25.29" lengthAdjust="spacing">16:31</text>
<text transform="translate(509.91 618.50) rotate(-90) scale(1 1.090)" font-size="11.38" fill="#666" text-anchor="middle" textLength="66.58" lengthAdjust="spacing" font-weight="700">Amperage, A</text>
</svg>
<span class="t " style="left:753.18px;top:325.98px;font-size:12.19px;line-height:12.19px;color:#a8a8a8;-webkit-text-stroke:0.18px currentColor;letter-spacing:-0.341px;transform:scaleY(1.017);transform-origin:0 10.32px;">Avg</span>
<div class="b" style="left:11.90px;top:351.90px;width:8.00px;height:8.00px;border-radius:50%;background:#FF5A37"></div>
<span class="t " style="left:24.34px;top:350.40px;font-size:12.40px;line-height:12.40px;color:#424242;-webkit-text-stroke:0.18px currentColor;letter-spacing:-0.164px;">Smart Meter A</span>
<span class="t " style="left:737.03px;top:350.30px;font-size:12.40px;line-height:12.40px;color:#212121;-webkit-text-stroke:0.45px currentColor;letter-spacing:0.065px;">3.92 A</span>
<div class="b" style="left:11.90px;top:376.90px;width:8.00px;height:8.00px;border-radius:50%;background:#43A053"></div>
<span class="t " style="left:24.34px;top:375.40px;font-size:12.40px;line-height:12.40px;color:#424242;-webkit-text-stroke:0.18px currentColor;letter-spacing:-0.168px;">Smart Meter B</span>
<span class="t " style="left:737.22px;top:375.30px;font-size:12.40px;line-height:12.40px;color:#212121;-webkit-text-stroke:0.45px currentColor;letter-spacing:0.028px;">4.34 A</span>
<div class="b" style="left:11.90px;top:401.90px;width:8.00px;height:8.00px;border-radius:50%;background:#2D8FEF"></div>
<span class="t " style="left:24.34px;top:400.40px;font-size:12.40px;line-height:12.40px;color:#424242;-webkit-text-stroke:0.18px currentColor;letter-spacing:-0.240px;">Smart Meter C</span>
<span class="t " style="left:729.86px;top:400.30px;font-size:12.40px;line-height:12.40px;color:#212121;-webkit-text-stroke:0.45px currentColor;letter-spacing:0.100px;">10.94 A</span>
</section>
<section class="card " style="left:1283px;top:443.3px;width:627px;height:425.7px">
<h2>
<span class="t " style="left:9.30px;top:15.45px;font-size:23.93px;line-height:23.93px;color:#212121;font-weight:700;letter-spacing:-0.670px;transform:scaleY(1.037);transform-origin:0 20.25px;">Alarms</span>
</h2>
<svg class="ic" style="left:500.80px;top:15.90px" width="20" height="20" viewBox="0 0 24 24"><path fill="#212121" d="M15.5 14h-.79l-.28-.27C15.41 12.59 16 11.11 16 9.5 16 5.91 13.09 3 9.5 3S3 5.91 3 9.5 5.91 16 9.5 16c1.61 0 3.09-.59 4.23-1.57l.27.28v.79l5 4.99L20.49 19l-4.99-5zm-6 0C7.01 14 5 11.99 5 9.5S7.01 5 9.5 5 14 7.01 14 9.5 11.99 14 9.5 14z"/></svg>
<svg class="ic" style="left:532.75px;top:15.45px" width="20.5" height="20.5" viewBox="0 0 24 24"><path fill="#212121" stroke="#212121" stroke-width="0.5" d="M10 18h4v-2h-4v2zM3 6v2h18V6H3zm3 7h12v-2H6v2z"/></svg>
<svg class="ic" style="left:564.25px;top:15.15px" width="21.5" height="21.5" viewBox="0 0 24 24"><path fill="#212121" d="M10 18h5V5h-5v13zm-6 0h5V5H4v13zM16 5v13h5V5h-5z"/></svg>
<svg class="ic" style="left:597.00px;top:15.90px" width="20" height="20" viewBox="0 0 24 24"><path fill="#212121" d="M7 14H5v5h5v-2H7v-3zm-2-4h2V7h3V5H5v5zm12 7h-3v2h5v-5h-2v3zM14 5v2h3v3h2V5h-5z"/></svg>
<svg class="ic" style="left:9.40px;top:54.30px" width="24" height="24" viewBox="0 0 24 24"><path fill="#2a2a2a" d="M11.99 2C6.47 2 2 6.48 2 12s4.47 10 9.99 10C17.52 22 22 17.52 22 12S17.52 2 11.99 2zM12 20c-4.42 0-8-3.58-8-8s3.58-8 8-8 8 3.58 8 8-3.58 8-8 8zm.5-13H11v6l5.25 3.15.75-1.23-4.5-2.67z"/></svg>
<span class="t " style="left:36.51px;top:58.35px;font-size:14.47px;line-height:14.47px;color:#424242;-webkit-text-stroke:0.18px currentColor;letter-spacing:-0.283px;">Realtime - last day</span>
<div class="b" style="left:27.40px;top:101.30px;width:17.40px;height:17.60px;border:2px solid #616161;border-radius:2.5px;box-sizing:border-box"></div>
<span class="t " style="left:60.64px;top:102.15px;font-size:14.47px;line-height:14.47px;color:#757575;-webkit-text-stroke:0.45px currentColor;letter-spacing:0.099px;">Start time</span>
<svg class="ic" style="left:128.20px;top:102.00px" width="14" height="16" viewBox="0 0 14 16"><path d="M7 2.1V13.4M2.7 9L7 13.5L11.3 9" fill="none" stroke="#6e6e6e" stroke-width="1.7" stroke-linejoin="miter"/></svg>
<span class="t " style="left:150.91px;top:102.15px;font-size:14.47px;line-height:14.47px;color:#757575;-webkit-text-stroke:0.45px currentColor;letter-spacing:-0.144px;">Originator</span>
<span class="t " style="left:241.98px;top:102.15px;font-size:14.47px;line-height:14.47px;color:#757575;-webkit-text-stroke:0.45px currentColor;letter-spacing:-0.400px;">Type</span>
<span class="t " style="left:370.84px;top:102.15px;font-size:14.47px;line-height:14.47px;color:#757575;-webkit-text-stroke:0.45px currentColor;letter-spacing:-0.225px;">Severity</span>
<span class="t " style="left:449.34px;top:102.15px;font-size:14.47px;line-height:14.47px;color:#757575;-webkit-text-stroke:0.45px currentColor;letter-spacing:-0.027px;">Status</span>
<div class="b" style="left:4.00px;top:136.70px;width:620.00px;height:1.00px;background:#e7e7e7"></div>
<div class="b" style="left:27.40px;top:155.10px;width:17.40px;height:17.60px;border:2px solid #616161;border-radius:2.5px;box-sizing:border-box"></div>
<span class="t " style="left:60.62px;top:147.23px;font-size:13.43px;line-height:13.43px;color:#212121;-webkit-text-stroke:0.18px currentColor;letter-spacing:0.116px;">2024-11-14</span>
<span class="t " style="left:60.28px;top:167.13px;font-size:13.43px;line-height:13.43px;color:#212121;-webkit-text-stroke:0.18px currentColor;letter-spacing:0.089px;">16:30:54</span>
<span class="t " style="left:150.99px;top:147.23px;font-size:13.43px;line-height:13.43px;color:#212121;-webkit-text-stroke:0.18px currentColor;letter-spacing:0.113px;">Smart Meter</span>
<span class="t " style="left:150.50px;top:167.13px;font-size:13.43px;line-height:13.43px;color:#212121;-webkit-text-stroke:0.18px currentColor;">B</span>
<span class="t " style="left:241.20px;top:157.03px;font-size:13.43px;line-height:13.43px;color:#212121;-webkit-text-stroke:0.18px currentColor;letter-spacing:0.232px;">Low Voltage Alarm</span>
<span class="t " style="left:370.95px;top:157.03px;font-size:13.43px;line-height:13.43px;color:#F0432E;font-weight:700;letter-spacing:-0.035px;">Critical</span>
<span class="t " style="left:449.97px;top:147.23px;font-size:13.43px;line-height:13.43px;color:#212121;-webkit-text-stroke:0.18px currentColor;letter-spacing:0.148px;">Active</span>
<span class="t " style="left:448.96px;top:167.13px;font-size:13.43px;line-height:13.43px;color:#212121;-webkit-text-stroke:0.18px currentColor;letter-spacing:0.079px;">Unacknowledged</span>
<svg class="ic" style="left:572.00px;top:153.80px" width="20" height="20" viewBox="0 0 24 24"><path fill="#616161" d="M6 10c-1.1 0-2 .9-2 2s.9 2 2 2 2-.9 2-2-.9-2-2-2zm12 0c-1.1 0-2 .9-2 2s.9 2 2 2 2-.9 2-2-.9-2-2-2zm-6 0c-1.1 0-2 .9-2 2s.9 2 2 2 2-.9 2-2-.9-2-2-2z"/></svg>
<div class="b" style="left:621.60px;top:164.40px;width:1.80px;height:2.60px;background:#9e9e9e;border-radius:1px"></div>
<div class="b" style="left:4.00px;top:188.70px;width:620.00px;height:1.00px;background:#e7e7e7"></div>
<div class="b" style="left:27.40px;top:207.10px;width:17.40px;height:17.60px;border:2px solid #616161;border-radius:2.5px;box-sizing:border-box"></div>
<span class="t " style="left:60.62px;top:199.23px;font-size:13.43px;line-height:13.43px;color:#212121;-webkit-text-stroke:0.18px currentColor;letter-spacing:0.116px;">2024-11-14</span>
<span class="t " style="left:60.28px;top:219.13px;font-size:13.43px;line-height:13.43px;color:#212121;-webkit-text-stroke:0.18px currentColor;letter-spacing:0.117px;">16:30:23</span>
<span class="t " style="left:150.99px;top:199.23px;font-size:13.43px;line-height:13.43px;color:#212121;-webkit-text-stroke:0.18px currentColor;letter-spacing:0.113px;">Smart Meter</span>
<span class="t " style="left:150.92px;top:219.13px;font-size:13.43px;line-height:13.43px;color:#212121;-webkit-text-stroke:0.18px currentColor;">C</span>
<span class="t " style="left:241.20px;top:209.03px;font-size:13.43px;line-height:13.43px;color:#212121;-webkit-text-stroke:0.18px currentColor;letter-spacing:0.232px;">Low Voltage Alarm</span>
<span class="t " style="left:370.95px;top:209.03px;font-size:13.43px;line-height:13.43px;color:#F0432E;font-weight:700;letter-spacing:-0.035px;">Critical</span>
<span class="t " style="left:449.97px;top:199.23px;font-size:13.43px;line-height:13.43px;color:#212121;-webkit-text-stroke:0.18px currentColor;letter-spacing:0.148px;">Active</span>
<span class="t " style="left:448.96px;top:219.13px;font-size:13.43px;line-height:13.43px;color:#212121;-webkit-text-stroke:0.18px currentColor;letter-spacing:0.079px;">Unacknowledged</span>
<svg class="ic" style="left:572.00px;top:205.80px" width="20" height="20" viewBox="0 0 24 24"><path fill="#616161" d="M6 10c-1.1 0-2 .9-2 2s.9 2 2 2 2-.9 2-2-.9-2-2-2zm12 0c-1.1 0-2 .9-2 2s.9 2 2 2 2-.9 2-2-.9-2-2-2zm-6 0c-1.1 0-2 .9-2 2s.9 2 2 2 2-.9 2-2-.9-2-2-2z"/></svg>
<div class="b" style="left:621.60px;top:216.40px;width:1.80px;height:2.60px;background:#9e9e9e;border-radius:1px"></div>
<div class="b" style="left:4.00px;top:240.70px;width:620.00px;height:1.00px;background:#e7e7e7"></div>
<div class="b" style="left:27.40px;top:259.10px;width:17.40px;height:17.60px;border:2px solid #616161;border-radius:2.5px;box-sizing:border-box"></div>
<span class="t " style="left:60.62px;top:251.23px;font-size:13.43px;line-height:13.43px;color:#212121;-webkit-text-stroke:0.18px currentColor;letter-spacing:0.116px;">2024-11-14</span>
<span class="t " style="left:60.28px;top:271.13px;font-size:13.43px;line-height:13.43px;color:#212121;-webkit-text-stroke:0.18px currentColor;letter-spacing:0.126px;">16:26:31</span>
<span class="t " style="left:150.99px;top:251.23px;font-size:13.43px;line-height:13.43px;color:#212121;-webkit-text-stroke:0.18px currentColor;letter-spacing:0.113px;">Smart Meter</span>
<span class="t " style="left:151.57px;top:271.13px;font-size:13.43px;line-height:13.43px;color:#212121;-webkit-text-stroke:0.18px currentColor;">A</span>
<span class="t " style="left:241.20px;top:261.03px;font-size:13.43px;line-height:13.43px;color:#212121;-webkit-text-stroke:0.18px currentColor;letter-spacing:0.196px;">High Voltage Alarm</span>
<span class="t " style="left:370.95px;top:261.03px;font-size:13.43px;line-height:13.43px;color:#F0432E;font-weight:700;letter-spacing:-0.035px;">Critical</span>
<span class="t " style="left:449.97px;top:251.23px;font-size:13.43px;line-height:13.43px;color:#212121;-webkit-text-stroke:0.18px currentColor;letter-spacing:0.148px;">Active</span>
<span class="t " style="left:448.96px;top:271.13px;font-size:13.43px;line-height:13.43px;color:#212121;-webkit-text-stroke:0.18px currentColor;letter-spacing:0.079px;">Unacknowledged</span>
<svg class="ic" style="left:572.00px;top:257.80px" width="20" height="20" viewBox="0 0 24 24"><path fill="#616161" d="M6 10c-1.1 0-2 .9-2 2s.9 2 2 2 2-.9 2-2-.9-2-2-2zm12 0c-1.1 0-2 .9-2 2s.9 2 2 2 2-.9 2-2-.9-2-2-2zm-6 0c-1.1 0-2 .9-2 2s.9 2 2 2 2-.9 2-2-.9-2-2-2z"/></svg>
<div class="b" style="left:621.60px;top:268.40px;width:1.80px;height:2.60px;background:#9e9e9e;border-radius:1px"></div>
<div class="b" style="left:4.00px;top:292.70px;width:620.00px;height:1.00px;background:#e7e7e7"></div>
<div class="b" style="left:4.00px;top:359.00px;width:540.40px;height:6.20px;background:#d4d4d4"></div>
<div class="b" style="left:544.40px;top:365.00px;width:79.60px;height:1.00px;background:#e4e4e4"></div>
<span class="t " style="left:118.36px;top:389.20px;font-size:12.40px;line-height:12.40px;color:#757575;-webkit-text-stroke:0.18px currentColor;letter-spacing:0.294px;">Items per page:</span>
<div class="b" style="left:216.80px;top:373.70px;width:83.20px;height:39.50px;border:1px solid #c2c2c2;border-radius:4px;box-sizing:border-box"></div>
<span class="t " style="left:231.86px;top:389.20px;font-size:12.40px;line-height:12.40px;color:#757575;-webkit-text-stroke:0.18px currentColor;letter-spacing:0.835px;">10</span>
<svg class="ic" style="left:266.50px;top:381.90px" width="26" height="26" viewBox="0 0 24 24"><path fill="#616161" d="M7 10l5 5 5-5z"/></svg>
<span class="t " style="left:335.66px;top:389.20px;font-size:12.40px;line-height:12.40px;color:#757575;-webkit-text-stroke:0.18px currentColor;letter-spacing:0.386px;">1 – 3 of 3</span>
<svg class="ic" style="left:435.30px;top:382.50px" width="24" height="24" viewBox="0 0 24 24"><path fill="#d6d6d6" d="M18.41 16.59L13.82 12l4.59-4.59L17 6l-6 6 6 6zM6 6h2v12H6z"/></svg>
<svg class="ic" style="left:483.00px;top:382.50px" width="24" height="24" viewBox="0 0 24 24"><path fill="#d6d6d6" d="M15.41 7.41L14 6l-6 6 6 6 1.41-1.41L10.83 12z"/></svg>
<svg class="ic" style="left:531.50px;top:382.50px" width="24" height="24" viewBox="0 0 24 24"><path fill="#d6d6d6" d="M10 6L8.59 7.41 13.17 12l-4.58 4.59L10 18l6-6z"/></svg>
<svg class="ic" style="left:579.50px;top:382.50px" width="24" height="24" viewBox="0 0 24 24"><path fill="#d6d6d6" d="M5.59 7.41L10.18 12l-4.59 4.59L7 18l6-6-6-6zM16 6h2v12h-2z"/></svg>
<span class="t " style="left:439.08px;top:416.71px;font-size:12.40px;line-height:12.40px;color:#212121;-webkit-text-stroke:0.18px currentColor;letter-spacing:-0.347px;">Powered by</span>
<span class="t " style="left:504.72px;top:416.70px;font-size:12.40px;line-height:12.40px;color:#2A6DB8;-webkit-text-stroke:0.45px currentColor;letter-spacing:-0.112px;">Thingsboard v.3.8.1</span>
</section>
</body></html>
